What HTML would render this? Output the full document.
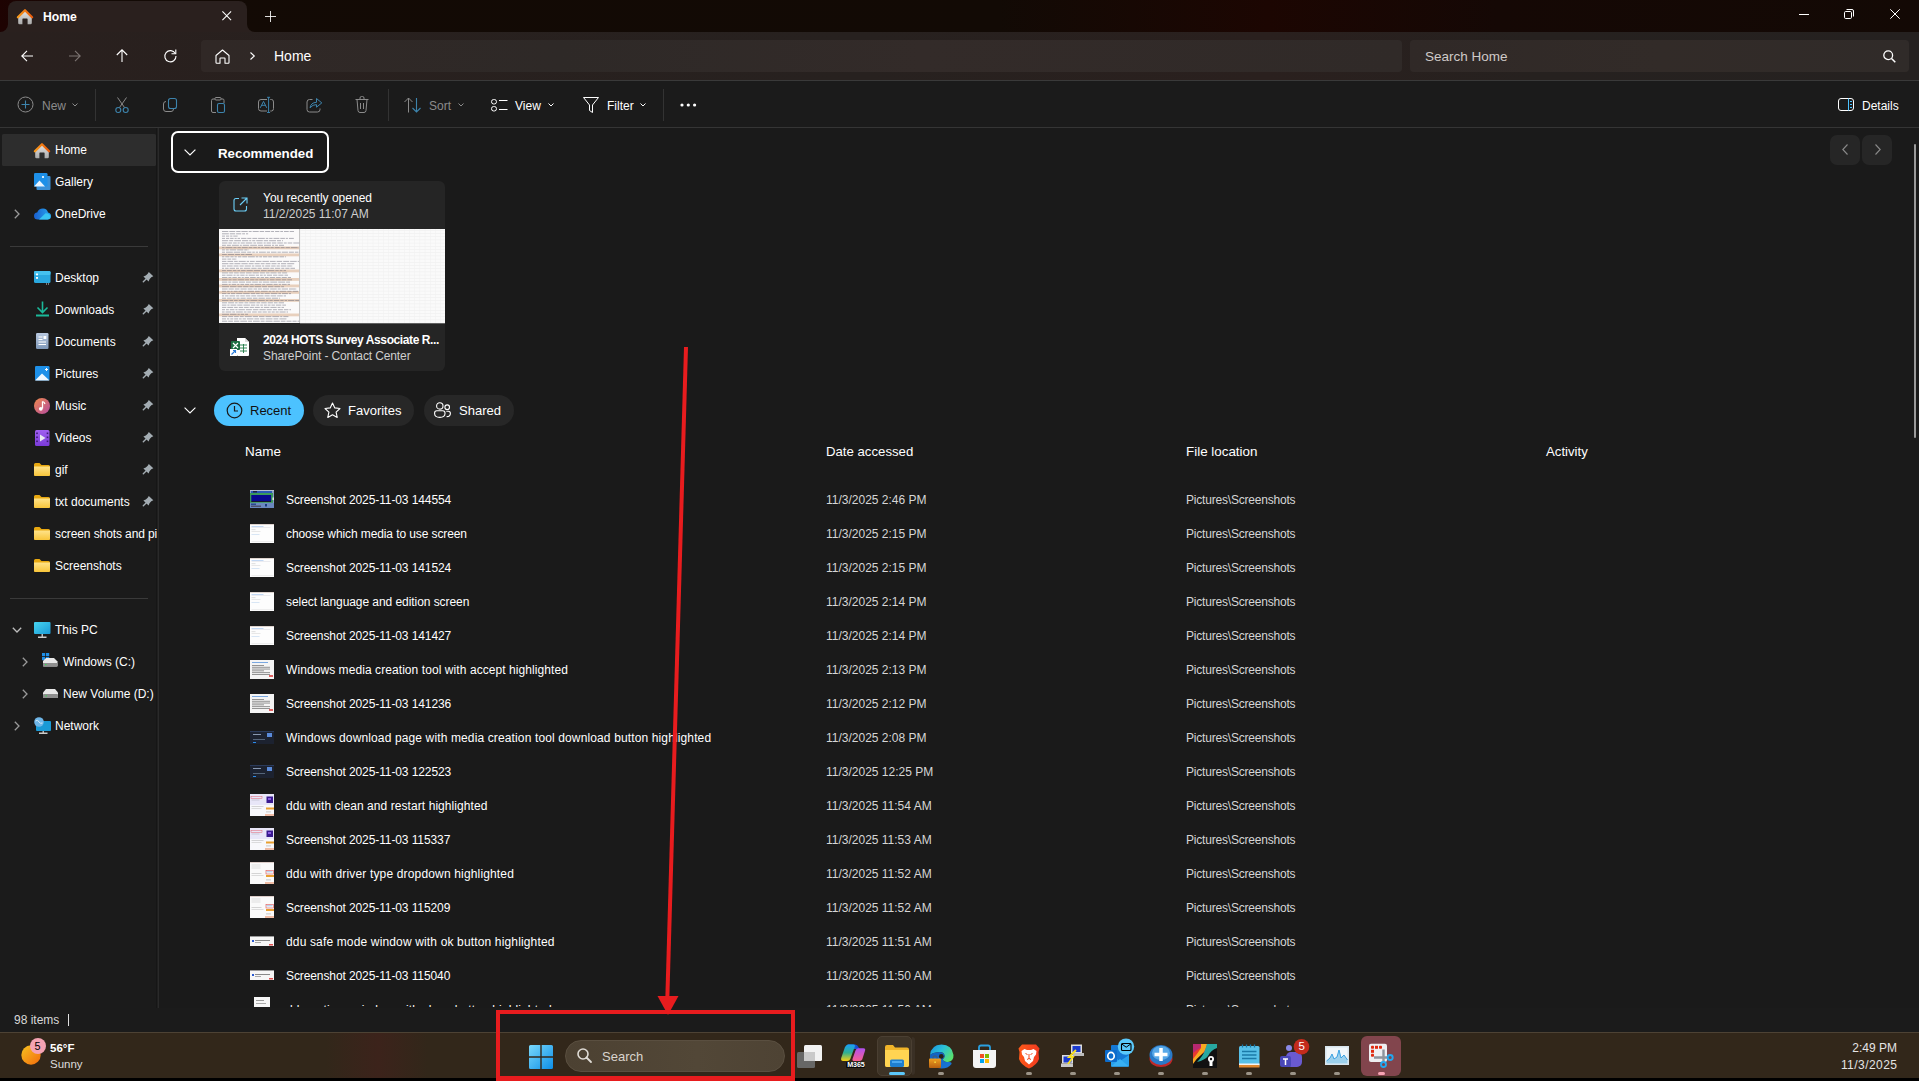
<!DOCTYPE html>
<html><head><meta charset="utf-8"><style>
*{margin:0;padding:0;box-sizing:border-box}
html,body{width:1919px;height:1081px;overflow:hidden;background:#1b1b1b;font-family:"Liberation Sans",sans-serif;color:#fff;font-size:12px}
.a{position:absolute}
.t{position:absolute;white-space:nowrap;line-height:1}
svg{position:absolute;overflow:visible}
</style></head><body>
<div class="a" style="left:0px;top:0px;width:1919px;height:32px;background:linear-gradient(90deg,#1e0302 0%,#130a05 5%,#120a05 52%,#1c0602 66%,#150805 78%,#130905 100%);"></div>
<div class="a" style="left:0px;top:32px;width:1919px;height:48px;background:linear-gradient(90deg,#29201e 0%,#27211f 45%,#2a201e 66%,#26211f 80%,#252120 100%);"></div>
<div class="a" style="left:8px;top:1px;width:239px;height:31px;background:#2a201e;border-radius:8px 8px 0 0"></div>
<div class="a" style="left:0px;top:24px;width:8px;height:8px;background:#2a201e"></div>
<div class="a" style="left:0px;top:23px;width:8px;height:9px;background:#1e0302;border-radius:0 0 8px 0"></div>
<div class="a" style="left:247px;top:24px;width:8px;height:8px;background:#2a201e"></div>
<div class="a" style="left:247px;top:23px;width:8px;height:9px;background:#130a05;border-radius:0 0 0 8px"></div>
<div class="a" style="left:0px;top:80px;width:1919px;height:48px;background:#1b1b1b;border-top:1px solid #3a3a3a;border-bottom:1px solid #353535"></div>
<div class="a" style="left:0px;top:128px;width:158px;height:880px;background:#1b1b1b;"></div>
<div class="a" style="left:156px;top:128px;width:1px;height:880px;background:#161616;"></div>
<div class="a" style="left:157px;top:128px;width:1px;height:880px;background:#1f1f1f;"></div>
<div class="a" style="left:158px;top:128px;width:1px;height:880px;background:#2a2a2a;"></div>
<div class="a" style="left:159px;top:128px;width:1760px;height:880px;background:#1a1a1a;"></div>
<div class="a" style="left:0px;top:1008px;width:1919px;height:24px;background:#1b1b1b;"></div>
<div class="a" style="left:0px;top:1032px;width:1919px;height:46px;background:linear-gradient(90deg,#32271a 0%,#32271a 17%,#3c231b 19.7%,#32271a 22.3%,#32271a 100%);border-top:1px solid #4d4234"></div>
<div class="a" style="left:0px;top:1078px;width:1919px;height:3px;background:#000;"></div>
<svg style="left:17px;top:8px;" width="17" height="17" viewBox="0 0 17 17"><defs><linearGradient id="hg" x1="0" y1="0" x2="0" y2="1"><stop offset="0" stop-color="#e2e2e2"/><stop offset="1" stop-color="#aaaaaa"/></linearGradient><linearGradient id="rf" x1="0" y1="0" x2="1" y2="0"><stop offset="0" stop-color="#f89a1c"/><stop offset="1" stop-color="#e85a0c"/></linearGradient></defs>
<path d="M1.2 8.6 L8 3 L14.8 8.6 V15 Q14.8 16.3 13.5 16.3 H10.6 V11.2 Q10.6 10.6 10 10.6 H6 Q5.4 10.6 5.4 11.2 V16.3 H2.5 Q1.2 16.3 1.2 15 Z" fill="url(#hg)"/>
<path d="M0.9 9.2 L8 2.2 L15.1 9.2" fill="none" stroke="url(#rf)" stroke-width="2.3" stroke-linejoin="round" stroke-linecap="round"/></svg>
<div class="t" style="left:43px;top:10.67px;font-size:12.2px;color:#ffffff;font-weight:bold;">Home</div>
<svg style="left:222px;top:11px;" width="9.5" height="9.5" viewBox="0 0 9.5 9.5"><path d="M0.4 0.4 L9.1 9.1 M9.1 0.4 L0.4 9.1" stroke="#fff" stroke-width="1.05"/></svg>
<svg style="left:265px;top:11px;" width="11" height="11" viewBox="0 0 11 11"><path d="M5.5 0 V11 M0 5.5 H11" stroke="#f4f4f4" stroke-width="0.9"/></svg>
<svg style="left:1799px;top:14px;" width="10" height="1" viewBox="0 0 10 1"><rect x="0" y="0" width="10" height="1" fill="#fff"/></svg>
<svg style="left:1844px;top:9px;" width="10" height="10" viewBox="0 0 10 10"><rect x="0.5" y="2.5" width="7" height="7" rx="1.2" fill="none" stroke="#fff" stroke-width="1"/><path d="M2.5 0.5 H8 Q9.5 0.5 9.5 2 V7.5" fill="none" stroke="#fff" stroke-width="1"/></svg>
<svg style="left:1890px;top:9px;" width="10" height="10" viewBox="0 0 10 10"><path d="M0.3 0.3 L9.7 9.7 M9.7 0.3 L0.3 9.7" stroke="#fff" stroke-width="1"/></svg>
<svg style="left:21px;top:50px;" width="12" height="12" viewBox="0 0 12 12"><path d="M12 6 H1 M6 0.8 L0.8 6 L6 11.2" fill="none" stroke="#fff" stroke-width="1.1"/></svg>
<svg style="left:69px;top:50px;" width="12" height="12" viewBox="0 0 12 12"><path d="M0 6 H11 M6 0.8 L11.2 6 L6 11.2" fill="none" stroke="#7c7472" stroke-width="1.1"/></svg>
<svg style="left:116px;top:49px;" width="12" height="13" viewBox="0 0 12 13"><path d="M6 13 V1 M0.8 6 L6 0.8 L11.2 6" fill="none" stroke="#fff" stroke-width="1.1"/></svg>
<svg style="left:164px;top:49px;" width="13" height="13" viewBox="0 0 13 13"><path d="M11.3 4.5 A5.6 5.6 0 1 0 12 7" fill="none" stroke="#fff" stroke-width="1.1"/><path d="M11.8 0.5 V4.8 H7.5" fill="none" stroke="#fff" stroke-width="1.1"/></svg>
<div class="a" style="left:201px;top:40px;width:1201px;height:32px;background:linear-gradient(90deg,#302826 0%,#2e2927 30%,#332b29 60%,#302a28 100%);border-radius:4px"></div>
<svg style="left:215px;top:49px;" width="15" height="15" viewBox="0 0 15 15"><path d="M1 6.5 L7.5 1 L14 6.5 V13.5 Q14 14.2 13.3 14.2 H10 V9.5 Q10 9 9.5 9 H5.5 Q5 9 5 9.5 V14.2 H1.7 Q1 14.2 1 13.5 Z" fill="none" stroke="#fff" stroke-width="1.1" stroke-linejoin="round"/></svg>
<svg style="left:250px;top:52px;" width="5" height="8" viewBox="0 0 5 8"><path d="M0.5 0.5 L4.3 4 L0.5 7.5" fill="none" stroke="#fff" stroke-width="1.1"/></svg>
<div class="t" style="left:274px;top:49.15px;font-size:14px;color:#ffffff;font-weight:normal;">Home</div>
<div class="a" style="left:1410px;top:40px;width:499px;height:32px;background:linear-gradient(90deg,#302927 0%,#322b28 50%,#302b29 100%);border-radius:4px"></div>
<div class="t" style="left:1425px;top:49.57px;font-size:13.5px;color:#cfcac8;font-weight:normal;">Search Home</div>
<svg style="left:1883px;top:50px;" width="13" height="13" viewBox="0 0 13 13"><circle cx="5.2" cy="5.2" r="4.4" fill="none" stroke="#fff" stroke-width="1.3"/><path d="M8.5 8.5 L12.3 12.3" stroke="#fff" stroke-width="1.5"/></svg>
<svg style="left:17px;top:96px;" width="17" height="17" viewBox="0 0 17 17"><circle cx="8.5" cy="8.5" r="7.5" fill="none" stroke="#8b8b8b" stroke-width="1"/><path d="M8.5 4.5 V12.5 M4.5 8.5 H12.5" stroke="#3d84ad" stroke-width="1.1"/></svg>
<div class="t" style="left:42px;top:99.84px;font-size:12px;color:#8b8b8b;font-weight:normal;">New</div>
<svg style="left:72px;top:103px;" width="6" height="4" viewBox="0 0 6 4"><path d="M0.5 0.5 L3 3 L5.5 0.5" fill="none" stroke="#8b8b8b" stroke-width="1"/></svg>
<div class="a" style="left:95px;top:89px;width:1px;height:32px;background:#333;"></div>
<svg style="left:115px;top:97px;" width="14" height="16" viewBox="0 0 14 16"><path d="M2.5 0.5 L9.5 10.5 M11.5 0.5 L4.5 10.5" stroke="#8b8b8b" stroke-width="1"/><circle cx="3.3" cy="13" r="2.5" fill="none" stroke="#3d84ad" stroke-width="1.1"/><circle cx="10.7" cy="13" r="2.5" fill="none" stroke="#3d84ad" stroke-width="1.1"/></svg>
<svg style="left:163px;top:98px;" width="14" height="14" viewBox="0 0 14 14"><path d="M3 3.5 Q0.5 3.5 0.5 6 V11 Q0.5 13.5 3 13.5 H8 Q10.5 13.5 10.5 11" fill="none" stroke="#8b8b8b" stroke-width="1"/><rect x="5.5" y="0.5" width="8" height="10" rx="2" fill="none" stroke="#3d84ad" stroke-width="1.1"/></svg>
<svg style="left:211px;top:97px;" width="14" height="16" viewBox="0 0 14 16"><path d="M4 2 H2 Q0.5 2 0.5 3.5 V14 Q0.5 15.5 2 15.5 H5 M10 2 H12 Q13 2 13 3.5 V6" fill="none" stroke="#8b8b8b" stroke-width="1"/><rect x="4" y="0.5" width="6" height="2.5" rx="1" fill="none" stroke="#8b8b8b" stroke-width="1"/><rect x="6.5" y="6.5" width="7" height="9" rx="1.5" fill="none" stroke="#3d84ad" stroke-width="1.1"/></svg>
<svg style="left:258px;top:96px;" width="17" height="18" viewBox="0 0 17 18"><path d="M9 3.5 H3 Q0.5 3.5 0.5 6 V12.5 Q0.5 15 3 15 H9 M12.3 3.5 H13.5 Q15.5 3.5 15.5 6 V12.5 Q15.5 15 13.5 15 H12.3" fill="none" stroke="#8b8b8b" stroke-width="1"/><path d="M10.6 1.3 V16.5 M9.1 1.3 H12.1 M9.1 16.5 H12.1" stroke="#3d84ad" stroke-width="1"/><path d="M2.3 11.8 L5.5 5.4 L8.7 11.8 M3.6 9.3 H7.4" fill="none" stroke="#3d84ad" stroke-width="1"/></svg>
<svg style="left:306px;top:97px;" width="17" height="16" viewBox="0 0 17 16"><path d="M6.5 2.5 H3.5 Q1 2.5 1 5 V12.5 Q1 15 3.5 15 H11.5 Q14 15 14 12.5 V11.5" fill="none" stroke="#8b8b8b" stroke-width="1"/><path d="M4 10.8 Q4.8 5.6 10.5 5.3 V1.5 L15.8 5.9 L10.5 10.2 V7.6 Q6.8 7.4 4 10.8 Z" fill="none" stroke="#3d84ad" stroke-width="1" stroke-linejoin="round"/></svg>
<svg style="left:355px;top:96px;" width="14" height="17" viewBox="0 0 14 17"><path d="M0.5 3.5 H13.5 M5 3.5 V2 Q5 0.5 6.5 0.5 H7.5 Q9 0.5 9 2 V3.5 M2 3.5 L3 14.5 Q3.2 16.5 5 16.5 H9 Q10.8 16.5 11 14.5 L12 3.5 M5.5 7 V13 M8.5 7 V13" fill="none" stroke="#8b8b8b" stroke-width="1"/></svg>
<div class="a" style="left:388px;top:89px;width:1px;height:32px;background:#333;"></div>
<svg style="left:404px;top:97px;" width="17" height="16" viewBox="0 0 17 16"><path d="M4.5 15.5 V1 M0.5 5 L4.5 1 L8.5 5" fill="none" stroke="#8b8b8b" stroke-width="1"/><path d="M12.5 1 V15 M8.5 11 L12.5 15 L16.5 11" fill="none" stroke="#3d84ad" stroke-width="1.1"/></svg>
<div class="t" style="left:429px;top:99.84px;font-size:12px;color:#8b8b8b;font-weight:normal;">Sort</div>
<svg style="left:458px;top:103px;" width="6" height="4" viewBox="0 0 6 4"><path d="M0.5 0.5 L3 3 L5.5 0.5" fill="none" stroke="#8b8b8b" stroke-width="1"/></svg>
<svg style="left:491px;top:99px;" width="17" height="13" viewBox="0 0 17 13"><rect x="0.5" y="0.5" width="5" height="4.5" rx="2.2" fill="none" stroke="#fff" stroke-width="1"/><rect x="0.5" y="7.5" width="5" height="4.5" rx="2.2" fill="none" stroke="#fff" stroke-width="1"/><path d="M8 1.5 H16.5 M8 10.5 H16.5" stroke="#fff" stroke-width="1"/></svg>
<div class="t" style="left:515px;top:99.84px;font-size:12px;color:#fff;font-weight:normal;">View</div>
<svg style="left:548px;top:103px;" width="6" height="4" viewBox="0 0 6 4"><path d="M0.5 0.5 L3 3 L5.5 0.5" fill="none" stroke="#fff" stroke-width="1"/></svg>
<svg style="left:583px;top:97px;" width="16" height="16" viewBox="0 0 16 16"><path d="M0.5 0.5 H15.5 L9.5 8 V15.5 L6.5 13.5 V8 Z" fill="none" stroke="#fff" stroke-width="1" stroke-linejoin="round"/></svg>
<div class="t" style="left:607px;top:99.84px;font-size:12px;color:#fff;font-weight:normal;">Filter</div>
<svg style="left:640px;top:103px;" width="6" height="4" viewBox="0 0 6 4"><path d="M0.5 0.5 L3 3 L5.5 0.5" fill="none" stroke="#fff" stroke-width="1"/></svg>
<div class="a" style="left:663px;top:89px;width:1px;height:32px;background:#333;"></div>
<svg style="left:680px;top:103px;" width="17" height="4" viewBox="0 0 17 4"><circle cx="2" cy="2" r="1.6" fill="#fff"/><circle cx="8.3" cy="2" r="1.6" fill="#fff"/><circle cx="14.6" cy="2" r="1.6" fill="#fff"/></svg>
<svg style="left:1838px;top:98px;" width="16" height="13" viewBox="0 0 16 13"><rect x="0.5" y="0.5" width="15" height="12" rx="2.5" fill="none" stroke="#fff" stroke-width="1"/><path d="M10.5 0.5 V12.5" stroke="#4cc2ff" stroke-width="1"/><path d="M12 3.5 H14 M12 6.5 H14 M12 9.5 H14" stroke="#4cc2ff" stroke-width="1"/></svg>
<div class="t" style="left:1862px;top:99.84px;font-size:12px;color:#fff;font-weight:normal;">Details</div>
<div class="a" style="left:2px;top:134px;width:154px;height:32px;background:#2d2d2d;border-radius:1.5px"></div>
<svg style="left:34px;top:142px;" width="17" height="17" viewBox="0 0 17 17"><defs><linearGradient id="hg2" x1="0" y1="0" x2="0" y2="1"><stop offset="0" stop-color="#e2e2e2"/><stop offset="1" stop-color="#aaaaaa"/></linearGradient><linearGradient id="rf2" x1="0" y1="0" x2="1" y2="0"><stop offset="0" stop-color="#f89a1c"/><stop offset="1" stop-color="#e85a0c"/></linearGradient></defs>
<path d="M1.2 8.6 L8 3 L14.8 8.6 V15 Q14.8 16.3 13.5 16.3 H10.6 V11.2 Q10.6 10.6 10 10.6 H6 Q5.4 10.6 5.4 11.2 V16.3 H2.5 Q1.2 16.3 1.2 15 Z" fill="url(#hg2)"/>
<path d="M0.9 9.2 L8 2.2 L15.1 9.2" fill="none" stroke="url(#rf2)" stroke-width="2.3" stroke-linejoin="round" stroke-linecap="round"/></svg>
<div class="t" style="left:55px;top:143.84px;font-size:12px;color:#ffffff;font-weight:normal;">Home</div>
<svg style="left:34px;top:173px;" width="17" height="17" viewBox="0 0 17 17"><rect x="2.5" y="3" width="14" height="14" rx="1" fill="#3a8fd6"/><rect x="0" y="0" width="13.5" height="13.5" rx="1.2" fill="#1e90e8"/><path d="M0 13.5 L5.5 7.5 L11 13.5 Z" fill="#e8f4ff"/><circle cx="9" cy="4" r="1.1" fill="#fff"/></svg>
<div class="t" style="left:55px;top:175.84px;font-size:12px;color:#ffffff;font-weight:normal;">Gallery</div>
<svg style="left:14px;top:209px;" width="6" height="10" viewBox="0 0 6 10"><path d="M0.8 0.8 L5 5 L0.8 9.2" fill="none" stroke="#9a9a9a" stroke-width="1.3"/></svg>
<svg style="left:34px;top:208px;" width="17" height="12" viewBox="0 0 17 12"><defs><linearGradient id="od" x1="0" y1="0" x2="1" y2="0"><stop offset="0" stop-color="#1a5fd0"/><stop offset="1" stop-color="#28a8f0"/></linearGradient></defs><path d="M4 11.5 Q0 11.5 0 8 Q0 5 3.2 4.6 Q4.6 0.5 9 0.5 Q13 0.5 14 4.5 Q17 5 17 8.2 Q17 11.5 13.5 11.5 Z" fill="url(#od)"/><path d="M5 11.5 L11.5 5.2 Q14.5 5 16 7.5 Q17.2 10.8 13.5 11.5 Z" fill="#38c4f4"/></svg>
<div class="t" style="left:55px;top:207.84px;font-size:12px;color:#ffffff;font-weight:normal;">OneDrive</div>
<div class="a" style="left:10px;top:246px;width:138px;height:1px;background:#3a3a3a;"></div>
<svg style="left:34px;top:271px;" width="17" height="14" viewBox="0 0 17 14"><rect x="0" y="0" width="16.5" height="12" rx="1.5" fill="#2aa9e0"/><rect x="0" y="0" width="16.5" height="4" rx="1.2" fill="#45c2ef"/><rect x="2" y="2.5" width="2" height="1.8" fill="#fff"/><rect x="2" y="6" width="2" height="1.8" fill="#fff"/><rect x="12" y="12.5" width="1" height="1" fill="#ddd"/><rect x="14" y="12.5" width="1" height="1" fill="#ddd"/></svg>
<div class="t" style="left:55px;top:271.84px;font-size:12px;color:#ffffff;font-weight:normal;">Desktop</div>
<svg style="left:142px;top:271px;" width="12" height="12" viewBox="0 0 12 12"><path d="M6.8 0.9 L11.3 5.3 L9.3 6.3 L7.5 8.2 L6.6 10.6 L1.4 5.4 L3.8 4.5 L5.7 2.7 Z" fill="#a3acb2"/><path d="M4.6 7.4 L1.3 10.7" stroke="#a3acb2" stroke-width="1.4" stroke-linecap="round"/></svg>
<svg style="left:36px;top:301px;" width="13" height="16" viewBox="0 0 13 16"><path d="M6.5 0.5 V11 M1.5 6.5 L6.5 11.5 L11.5 6.5" fill="none" stroke="#1bb99a" stroke-width="1.6"/><rect x="0" y="13.5" width="13" height="2" fill="#1bb99a"/></svg>
<div class="t" style="left:55px;top:303.84px;font-size:12px;color:#ffffff;font-weight:normal;">Downloads</div>
<svg style="left:142px;top:303px;" width="12" height="12" viewBox="0 0 12 12"><path d="M6.8 0.9 L11.3 5.3 L9.3 6.3 L7.5 8.2 L6.6 10.6 L1.4 5.4 L3.8 4.5 L5.7 2.7 Z" fill="#a3acb2"/><path d="M4.6 7.4 L1.3 10.7" stroke="#a3acb2" stroke-width="1.4" stroke-linecap="round"/></svg>
<svg style="left:36px;top:333px;" width="13" height="16" viewBox="0 0 13 16"><defs><linearGradient id="dg" x1="0" y1="0" x2="0" y2="1"><stop offset="0" stop-color="#b9c9e0"/><stop offset="1" stop-color="#7f98b8"/></linearGradient></defs><rect x="0" y="0" width="12.5" height="16" rx="1.2" fill="url(#dg)"/><path d="M2.5 4 H6.5 M2.5 6.5 H6.5 M2.5 9 H10 M2.5 11.5 H10" stroke="#fff" stroke-width="1"/><rect x="7.5" y="3" width="2.8" height="3" fill="#fff"/></svg>
<div class="t" style="left:55px;top:335.84px;font-size:12px;color:#ffffff;font-weight:normal;">Documents</div>
<svg style="left:142px;top:335px;" width="12" height="12" viewBox="0 0 12 12"><path d="M6.8 0.9 L11.3 5.3 L9.3 6.3 L7.5 8.2 L6.6 10.6 L1.4 5.4 L3.8 4.5 L5.7 2.7 Z" fill="#a3acb2"/><path d="M4.6 7.4 L1.3 10.7" stroke="#a3acb2" stroke-width="1.4" stroke-linecap="round"/></svg>
<svg style="left:35px;top:366px;" width="15" height="15" viewBox="0 0 15 15"><rect x="0" y="0" width="14.5" height="14.5" rx="1.2" fill="#1e90e8"/><path d="M0 14.5 L7 7.5 L14.5 14.5 Z" fill="#f0f8ff"/><path d="M11.5 2 V5 M10 3.5 H13" stroke="#fff" stroke-width="1"/></svg>
<div class="t" style="left:55px;top:367.84px;font-size:12px;color:#ffffff;font-weight:normal;">Pictures</div>
<svg style="left:142px;top:367px;" width="12" height="12" viewBox="0 0 12 12"><path d="M6.8 0.9 L11.3 5.3 L9.3 6.3 L7.5 8.2 L6.6 10.6 L1.4 5.4 L3.8 4.5 L5.7 2.7 Z" fill="#a3acb2"/><path d="M4.6 7.4 L1.3 10.7" stroke="#a3acb2" stroke-width="1.4" stroke-linecap="round"/></svg>
<svg style="left:34px;top:398px;" width="16" height="16" viewBox="0 0 16 16"><defs><linearGradient id="mg" x1="0" y1="0" x2="1" y2="1"><stop offset="0" stop-color="#f08a4b"/><stop offset="1" stop-color="#b44aa0"/></linearGradient></defs><circle cx="8" cy="8" r="8" fill="url(#mg)"/><path d="M8.5 3.5 V10.5" stroke="#fff" stroke-width="1.3"/><circle cx="6.8" cy="10.8" r="1.9" fill="#fff"/><path d="M8.5 3.5 Q10.5 4 11 6" fill="none" stroke="#fff" stroke-width="1.2"/></svg>
<div class="t" style="left:55px;top:399.84px;font-size:12px;color:#ffffff;font-weight:normal;">Music</div>
<svg style="left:142px;top:399px;" width="12" height="12" viewBox="0 0 12 12"><path d="M6.8 0.9 L11.3 5.3 L9.3 6.3 L7.5 8.2 L6.6 10.6 L1.4 5.4 L3.8 4.5 L5.7 2.7 Z" fill="#a3acb2"/><path d="M4.6 7.4 L1.3 10.7" stroke="#a3acb2" stroke-width="1.4" stroke-linecap="round"/></svg>
<svg style="left:35px;top:430px;" width="15" height="16" viewBox="0 0 15 16"><defs><linearGradient id="vg" x1="0" y1="0" x2="0" y2="1"><stop offset="0" stop-color="#a060f0"/><stop offset="1" stop-color="#7a3ad8"/></linearGradient></defs><rect x="0" y="0" width="14.5" height="16" rx="1.5" fill="url(#vg)"/><rect x="1.2" y="2.5" width="1.6" height="1.6" fill="#3a1a70"/><rect x="11.7" y="2.5" width="1.6" height="1.6" fill="#3a1a70"/><rect x="1.2" y="6.5" width="1.6" height="1.6" fill="#3a1a70"/><rect x="11.7" y="6.5" width="1.6" height="1.6" fill="#3a1a70"/><rect x="1.2" y="10.5" width="1.6" height="1.6" fill="#3a1a70"/><rect x="11.7" y="10.5" width="1.6" height="1.6" fill="#3a1a70"/><path d="M5 4.5 L10.5 8 L5 11.5 Z" fill="#e8e8f0"/></svg>
<div class="t" style="left:55px;top:431.84px;font-size:12px;color:#ffffff;font-weight:normal;">Videos</div>
<svg style="left:142px;top:431px;" width="12" height="12" viewBox="0 0 12 12"><path d="M6.8 0.9 L11.3 5.3 L9.3 6.3 L7.5 8.2 L6.6 10.6 L1.4 5.4 L3.8 4.5 L5.7 2.7 Z" fill="#a3acb2"/><path d="M4.6 7.4 L1.3 10.7" stroke="#a3acb2" stroke-width="1.4" stroke-linecap="round"/></svg>
<svg style="left:34px;top:463px;" width="16" height="13" viewBox="0 0 16 13"><defs><linearGradient id="fg" x1="0" y1="0" x2="0" y2="1"><stop offset="0" stop-color="#ffe38a"/><stop offset="1" stop-color="#f8c53a"/></linearGradient></defs><path d="M0 1.5 Q0 0 1.5 0 H5.5 L7.5 2 H14.5 Q16 2 16 3.5 V11.5 Q16 13 14.5 13 H1.5 Q0 13 0 11.5 Z" fill="#e8a810"/><path d="M0 3.5 H16 V11.5 Q16 13 14.5 13 H1.5 Q0 13 0 11.5 Z" fill="url(#fg)"/></svg>
<div class="t" style="left:55px;top:463.84px;font-size:12px;color:#ffffff;font-weight:normal;">gif</div>
<svg style="left:142px;top:463px;" width="12" height="12" viewBox="0 0 12 12"><path d="M6.8 0.9 L11.3 5.3 L9.3 6.3 L7.5 8.2 L6.6 10.6 L1.4 5.4 L3.8 4.5 L5.7 2.7 Z" fill="#a3acb2"/><path d="M4.6 7.4 L1.3 10.7" stroke="#a3acb2" stroke-width="1.4" stroke-linecap="round"/></svg>
<svg style="left:34px;top:495px;" width="16" height="13" viewBox="0 0 16 13"><defs><linearGradient id="fg" x1="0" y1="0" x2="0" y2="1"><stop offset="0" stop-color="#ffe38a"/><stop offset="1" stop-color="#f8c53a"/></linearGradient></defs><path d="M0 1.5 Q0 0 1.5 0 H5.5 L7.5 2 H14.5 Q16 2 16 3.5 V11.5 Q16 13 14.5 13 H1.5 Q0 13 0 11.5 Z" fill="#e8a810"/><path d="M0 3.5 H16 V11.5 Q16 13 14.5 13 H1.5 Q0 13 0 11.5 Z" fill="url(#fg)"/></svg>
<div class="t" style="left:55px;top:495.84px;font-size:12px;color:#ffffff;font-weight:normal;">txt documents</div>
<svg style="left:142px;top:495px;" width="12" height="12" viewBox="0 0 12 12"><path d="M6.8 0.9 L11.3 5.3 L9.3 6.3 L7.5 8.2 L6.6 10.6 L1.4 5.4 L3.8 4.5 L5.7 2.7 Z" fill="#a3acb2"/><path d="M4.6 7.4 L1.3 10.7" stroke="#a3acb2" stroke-width="1.4" stroke-linecap="round"/></svg>
<svg style="left:34px;top:527px;" width="16" height="13" viewBox="0 0 16 13"><defs><linearGradient id="fg" x1="0" y1="0" x2="0" y2="1"><stop offset="0" stop-color="#ffe38a"/><stop offset="1" stop-color="#f8c53a"/></linearGradient></defs><path d="M0 1.5 Q0 0 1.5 0 H5.5 L7.5 2 H14.5 Q16 2 16 3.5 V11.5 Q16 13 14.5 13 H1.5 Q0 13 0 11.5 Z" fill="#e8a810"/><path d="M0 3.5 H16 V11.5 Q16 13 14.5 13 H1.5 Q0 13 0 11.5 Z" fill="url(#fg)"/></svg>
<div class="a" style="left:0;top:521px;width:157px;height:24px;overflow:hidden">
<div class="t" style="left:55px;top:6.84px;font-size:12px;color:#ffffff;font-weight:normal;letter-spacing:-0.1px">screen shots and pi</div>
</div>
<svg style="left:34px;top:559px;" width="16" height="13" viewBox="0 0 16 13"><defs><linearGradient id="fg" x1="0" y1="0" x2="0" y2="1"><stop offset="0" stop-color="#ffe38a"/><stop offset="1" stop-color="#f8c53a"/></linearGradient></defs><path d="M0 1.5 Q0 0 1.5 0 H5.5 L7.5 2 H14.5 Q16 2 16 3.5 V11.5 Q16 13 14.5 13 H1.5 Q0 13 0 11.5 Z" fill="#e8a810"/><path d="M0 3.5 H16 V11.5 Q16 13 14.5 13 H1.5 Q0 13 0 11.5 Z" fill="url(#fg)"/></svg>
<div class="t" style="left:55px;top:559.84px;font-size:12px;color:#ffffff;font-weight:normal;">Screenshots</div>
<div class="a" style="left:10px;top:598px;width:138px;height:1px;background:#3a3a3a;"></div>
<svg style="left:12px;top:627px;" width="10" height="6" viewBox="0 0 10 6"><path d="M0.8 0.8 L5 5 L9.2 0.8" fill="none" stroke="#bdbdbd" stroke-width="1.3"/></svg>
<svg style="left:34px;top:622px;" width="17" height="17" viewBox="0 0 17 17"><defs><linearGradient id="pc" x1="0" y1="0" x2="1" y2="1"><stop offset="0" stop-color="#47d4f0"/><stop offset="1" stop-color="#1a9ad6"/></linearGradient></defs><rect x="0" y="0" width="16.5" height="12" rx="1" fill="url(#pc)"/><rect x="7.5" y="12" width="1.5" height="3" fill="#bbb"/><rect x="4" y="14.5" width="8.5" height="1.5" fill="#ccc"/></svg>
<div class="t" style="left:55px;top:623.84px;font-size:12px;color:#ffffff;font-weight:normal;">This PC</div>
<svg style="left:22px;top:657px;" width="6" height="10" viewBox="0 0 6 10"><path d="M0.8 0.8 L5 5 L0.8 9.2" fill="none" stroke="#9a9a9a" stroke-width="1.3"/></svg>
<svg style="left:42px;top:653px;" width="16" height="14" viewBox="0 0 16 14"><rect x="0" y="0" width="3.2" height="3.2" fill="#1e8fe8"/><rect x="4" y="0" width="3.2" height="3.2" fill="#1e8fe8"/><rect x="0" y="4" width="3.2" height="3.2" fill="#1e8fe8"/><rect x="4" y="4" width="3.2" height="3.2" fill="#1e8fe8"/><path d="M1 8 L4 5 H12 L15.5 8.5 V12.5 Q15.5 13.5 14.5 13.5 H2 Q1 13.5 1 12.5 Z" fill="#e8e8e8"/><rect x="1" y="10" width="14.5" height="3.5" fill="#8f8f8f"/><rect x="3" y="11" width="1.5" height="1.2" fill="#3cd35a"/></svg>
<div class="t" style="left:63px;top:655.84px;font-size:12px;color:#ffffff;font-weight:normal;">Windows (C:)</div>
<svg style="left:22px;top:689px;" width="6" height="10" viewBox="0 0 6 10"><path d="M0.8 0.8 L5 5 L0.8 9.2" fill="none" stroke="#9a9a9a" stroke-width="1.3"/></svg>
<svg style="left:43px;top:689px;" width="15" height="9" viewBox="0 0 15 9"><path d="M0 3.5 L3 0 H12 L15 3.5 V8 Q15 9 14 9 H1 Q0 9 0 8 Z" fill="#e8e8e8"/><rect x="0" y="5" width="15" height="4" rx="0.8" fill="#8f8f8f"/><rect x="2.5" y="6.3" width="1.5" height="1.2" fill="#3cd35a"/></svg>
<div class="t" style="left:63px;top:687.84px;font-size:12px;color:#ffffff;font-weight:normal;">New Volume (D:)</div>
<svg style="left:14px;top:721px;" width="6" height="10" viewBox="0 0 6 10"><path d="M0.8 0.8 L5 5 L0.8 9.2" fill="none" stroke="#9a9a9a" stroke-width="1.3"/></svg>
<svg style="left:34px;top:717px;" width="17" height="17" viewBox="0 0 17 17"><rect x="2" y="4" width="15" height="10" rx="1" fill="#1a9ad6"/><rect x="8.5" y="14" width="1.5" height="2" fill="#bbb"/><rect x="5" y="15.5" width="8.5" height="1.5" fill="#ccc"/><circle cx="5" cy="5" r="4.8" fill="#6fb6e8"/><path d="M1.5 4 Q4 2 5 5 Q6.5 7 8.5 6" fill="none" stroke="#d8eefc" stroke-width="1"/></svg>
<div class="t" style="left:55px;top:719.84px;font-size:12px;color:#ffffff;font-weight:normal;">Network</div>
<div class="a" style="left:171px;top:131px;width:158px;height:42px;border:2px solid #fff;border-radius:7px"></div>
<svg style="left:184px;top:149px;" width="12" height="7" viewBox="0 0 12 7"><path d="M0.6 0.6 L6 6 L11.4 0.6" fill="none" stroke="#fff" stroke-width="1.2"/></svg>
<div class="t" style="left:218px;top:146.74px;font-size:13.3px;color:#fff;font-weight:bold;">Recommended</div>
<div class="a" style="left:1830px;top:135px;width:30px;height:30px;background:#262626;border-radius:7px"></div>
<div class="a" style="left:1862px;top:135px;width:30px;height:30px;background:#262626;border-radius:7px"></div>
<svg style="left:1842px;top:144px;" width="6" height="11" viewBox="0 0 6 11"><path d="M5.5 0.5 L0.8 5.5 L5.5 10.5" fill="none" stroke="#8a8a8a" stroke-width="1.1"/></svg>
<svg style="left:1875px;top:144px;" width="6" height="11" viewBox="0 0 6 11"><path d="M0.5 0.5 L5.2 5.5 L0.5 10.5" fill="none" stroke="#8a8a8a" stroke-width="1.1"/></svg>
<div class="a" style="left:1914px;top:144px;width:2px;height:294px;background:#9a9a9a;border-radius:1px"></div>
<div class="a" style="left:219px;top:181px;width:226px;height:190px;background:#252525;border-radius:6px;overflow:hidden"><div class="a" style="left:0;top:48px;width:226px;height:94px;background:#f5f5f5"></div></div>
<svg style="left:219px;top:229px;" width="226" height="94" viewBox="0 0 226 94"><rect x="0" y="0" width="226" height="94" fill="#fafafa"/><rect x="0" y="0" width="80" height="94" fill="#fbfafa"/><rect x="0" y="17.5" width="80" height="2.8" fill="#e6cbb6" opacity="0.9"/><rect x="0" y="24.5" width="80" height="2.8" fill="#e6cbb6" opacity="0.9"/><rect x="0" y="40.5" width="80" height="2.8" fill="#e6cbb6" opacity="0.9"/><rect x="0" y="49" width="80" height="2.8" fill="#e6cbb6" opacity="0.9"/><rect x="0" y="55.5" width="80" height="2.8" fill="#e6cbb6" opacity="0.9"/><rect x="0" y="62" width="80" height="2.8" fill="#e6cbb6" opacity="0.9"/><rect x="0" y="70" width="80" height="2.8" fill="#e6cbb6" opacity="0.9"/><rect x="0" y="84.5" width="80" height="2.8" fill="#e6cbb6" opacity="0.9"/><rect x="3.0" y="2.0" width="6.3" height="1" fill="#6a6a78" opacity="0.5"/><rect x="10.3" y="2.0" width="5.9" height="1" fill="#6a6a78" opacity="0.5"/><rect x="17.2" y="2.0" width="4.3" height="1" fill="#6a6a78" opacity="0.5"/><rect x="22.4" y="2.0" width="6.3" height="1" fill="#6a6a78" opacity="0.5"/><rect x="29.7" y="2.0" width="2.9" height="1" fill="#6a6a78" opacity="0.5"/><rect x="33.7" y="2.0" width="6.0" height="1" fill="#6a6a78" opacity="0.5"/><rect x="40.7" y="2.0" width="4.4" height="1" fill="#6a6a78" opacity="0.5"/><rect x="46.1" y="2.0" width="5.1" height="1" fill="#6a6a78" opacity="0.5"/><rect x="52.1" y="2.0" width="2.9" height="1" fill="#6a6a78" opacity="0.5"/><rect x="56.1" y="2.0" width="4.2" height="1" fill="#6a6a78" opacity="0.5"/><rect x="61.3" y="2.0" width="2.7" height="1" fill="#6a6a78" opacity="0.5"/><rect x="65.0" y="2.0" width="4.7" height="1" fill="#6a6a78" opacity="0.5"/><rect x="70.7" y="2.0" width="4.3" height="1" fill="#6a6a78" opacity="0.5"/><rect x="3.0" y="4.3" width="6.8" height="1" fill="#6a6a78" opacity="0.5"/><rect x="10.8" y="4.3" width="5.3" height="1" fill="#6a6a78" opacity="0.5"/><rect x="17.1" y="4.3" width="5.1" height="1" fill="#6a6a78" opacity="0.5"/><rect x="23.2" y="4.3" width="2.8" height="1" fill="#6a6a78" opacity="0.5"/><rect x="27.0" y="4.3" width="2.1" height="1" fill="#6a6a78" opacity="0.5"/><rect x="3.0" y="6.6" width="3.0" height="1" fill="#6a6a78" opacity="0.5"/><rect x="7.0" y="6.6" width="3.2" height="1" fill="#6a6a78" opacity="0.5"/><rect x="11.2" y="6.6" width="2.2" height="1" fill="#6a6a78" opacity="0.5"/><rect x="14.3" y="6.6" width="4.3" height="1" fill="#6a6a78" opacity="0.5"/><rect x="3.0" y="8.9" width="3.0" height="1" fill="#6a6a78" opacity="0.5"/><rect x="7.0" y="8.9" width="3.2" height="1" fill="#6a6a78" opacity="0.5"/><rect x="11.1" y="8.9" width="3.5" height="1" fill="#6a6a78" opacity="0.5"/><rect x="15.6" y="8.9" width="2.0" height="1" fill="#6a6a78" opacity="0.5"/><rect x="18.6" y="8.9" width="2.4" height="1" fill="#6a6a78" opacity="0.5"/><rect x="22.1" y="8.9" width="5.3" height="1" fill="#6a6a78" opacity="0.5"/><rect x="28.3" y="8.9" width="4.0" height="1" fill="#6a6a78" opacity="0.5"/><rect x="33.4" y="8.9" width="4.8" height="1" fill="#6a6a78" opacity="0.5"/><rect x="39.1" y="8.9" width="6.7" height="1" fill="#6a6a78" opacity="0.5"/><rect x="46.8" y="8.9" width="2.4" height="1" fill="#6a6a78" opacity="0.5"/><rect x="50.2" y="8.9" width="3.3" height="1" fill="#6a6a78" opacity="0.5"/><rect x="54.5" y="8.9" width="5.8" height="1" fill="#6a6a78" opacity="0.5"/><rect x="61.3" y="8.9" width="4.6" height="1" fill="#6a6a78" opacity="0.5"/><rect x="66.8" y="8.9" width="2.1" height="1" fill="#6a6a78" opacity="0.5"/><rect x="70.0" y="8.9" width="4.8" height="1" fill="#6a6a78" opacity="0.5"/><rect x="3.0" y="11.2" width="6.2" height="1" fill="#6a6a78" opacity="0.5"/><rect x="10.2" y="11.2" width="3.9" height="1" fill="#6a6a78" opacity="0.5"/><rect x="15.2" y="11.2" width="6.8" height="1" fill="#6a6a78" opacity="0.5"/><rect x="23.0" y="11.2" width="6.2" height="1" fill="#6a6a78" opacity="0.5"/><rect x="30.2" y="11.2" width="2.0" height="1" fill="#6a6a78" opacity="0.5"/><rect x="33.2" y="11.2" width="3.0" height="1" fill="#6a6a78" opacity="0.5"/><rect x="37.2" y="11.2" width="6.6" height="1" fill="#6a6a78" opacity="0.5"/><rect x="44.8" y="11.2" width="4.3" height="1" fill="#6a6a78" opacity="0.5"/><rect x="50.1" y="11.2" width="6.9" height="1" fill="#6a6a78" opacity="0.5"/><rect x="58.0" y="11.2" width="4.0" height="1" fill="#6a6a78" opacity="0.5"/><rect x="63.0" y="11.2" width="1.0" height="1" fill="#6a6a78" opacity="0.5"/><rect x="3.0" y="13.5" width="5.4" height="1" fill="#6a6a78" opacity="0.5"/><rect x="9.4" y="13.5" width="3.7" height="1" fill="#6a6a78" opacity="0.5"/><rect x="14.1" y="13.5" width="3.6" height="1" fill="#6a6a78" opacity="0.5"/><rect x="18.6" y="13.5" width="2.1" height="1" fill="#6a6a78" opacity="0.5"/><rect x="21.7" y="13.5" width="4.1" height="1" fill="#6a6a78" opacity="0.5"/><rect x="26.7" y="13.5" width="6.6" height="1" fill="#6a6a78" opacity="0.5"/><rect x="34.4" y="13.5" width="2.7" height="1" fill="#6a6a78" opacity="0.5"/><rect x="38.0" y="13.5" width="5.5" height="1" fill="#6a6a78" opacity="0.5"/><rect x="44.6" y="13.5" width="2.1" height="1" fill="#6a6a78" opacity="0.5"/><rect x="47.6" y="13.5" width="4.3" height="1" fill="#6a6a78" opacity="0.5"/><rect x="52.9" y="13.5" width="4.4" height="1" fill="#6a6a78" opacity="0.5"/><rect x="58.4" y="13.5" width="5.4" height="1" fill="#6a6a78" opacity="0.5"/><rect x="64.8" y="13.5" width="2.9" height="1" fill="#6a6a78" opacity="0.5"/><rect x="68.7" y="13.5" width="4.5" height="1" fill="#6a6a78" opacity="0.5"/><rect x="74.3" y="13.5" width="6.7" height="1" fill="#6a6a78" opacity="0.5"/><rect x="3.0" y="15.8" width="3.9" height="1" fill="#6a6a78" opacity="0.5"/><rect x="7.9" y="15.8" width="4.0" height="1" fill="#6a6a78" opacity="0.5"/><rect x="12.9" y="15.8" width="7.0" height="1" fill="#6a6a78" opacity="0.5"/><rect x="20.8" y="15.8" width="2.0" height="1" fill="#6a6a78" opacity="0.5"/><rect x="23.8" y="15.8" width="6.3" height="1" fill="#6a6a78" opacity="0.5"/><rect x="31.2" y="15.8" width="6.9" height="1" fill="#6a6a78" opacity="0.5"/><rect x="39.0" y="15.8" width="5.0" height="1" fill="#6a6a78" opacity="0.5"/><rect x="45.0" y="15.8" width="7.0" height="1" fill="#6a6a78" opacity="0.5"/><rect x="53.0" y="15.8" width="2.1" height="1" fill="#6a6a78" opacity="0.5"/><rect x="56.1" y="15.8" width="2.9" height="1" fill="#6a6a78" opacity="0.5"/><rect x="60.0" y="15.8" width="5.0" height="1" fill="#6a6a78" opacity="0.5"/><rect x="3.0" y="18.1" width="2.5" height="1" fill="#6a6a78" opacity="0.5"/><rect x="6.5" y="18.1" width="6.9" height="1" fill="#6a6a78" opacity="0.5"/><rect x="14.4" y="18.1" width="3.1" height="1" fill="#6a6a78" opacity="0.5"/><rect x="18.5" y="18.1" width="3.3" height="1" fill="#6a6a78" opacity="0.5"/><rect x="22.8" y="18.1" width="5.9" height="1" fill="#6a6a78" opacity="0.5"/><rect x="29.7" y="18.1" width="3.6" height="1" fill="#6a6a78" opacity="0.5"/><rect x="34.3" y="18.1" width="3.5" height="1" fill="#6a6a78" opacity="0.5"/><rect x="38.8" y="18.1" width="2.4" height="1" fill="#6a6a78" opacity="0.5"/><rect x="42.2" y="18.1" width="2.5" height="1" fill="#6a6a78" opacity="0.5"/><rect x="45.6" y="18.1" width="4.9" height="1" fill="#6a6a78" opacity="0.5"/><rect x="51.5" y="18.1" width="3.2" height="1" fill="#6a6a78" opacity="0.5"/><rect x="55.7" y="18.1" width="5.0" height="1" fill="#6a6a78" opacity="0.5"/><rect x="61.7" y="18.1" width="3.9" height="1" fill="#6a6a78" opacity="0.5"/><rect x="66.6" y="18.1" width="4.3" height="1" fill="#6a6a78" opacity="0.5"/><rect x="71.9" y="18.1" width="6.8" height="1" fill="#6a6a78" opacity="0.5"/><rect x="79.7" y="18.1" width="0.3" height="1" fill="#6a6a78" opacity="0.5"/><rect x="3.0" y="20.4" width="2.9" height="1" fill="#6a6a78" opacity="0.5"/><rect x="6.9" y="20.4" width="2.8" height="1" fill="#6a6a78" opacity="0.5"/><rect x="10.7" y="20.4" width="6.5" height="1" fill="#6a6a78" opacity="0.5"/><rect x="18.2" y="20.4" width="6.1" height="1" fill="#6a6a78" opacity="0.5"/><rect x="25.3" y="20.4" width="3.2" height="1" fill="#6a6a78" opacity="0.5"/><rect x="29.6" y="20.4" width="0.4" height="1" fill="#6a6a78" opacity="0.5"/><rect x="3.0" y="22.7" width="3.0" height="1" fill="#6a6a78" opacity="0.5"/><rect x="7.0" y="22.7" width="6.8" height="1" fill="#6a6a78" opacity="0.5"/><rect x="14.7" y="22.7" width="6.4" height="1" fill="#6a6a78" opacity="0.5"/><rect x="22.1" y="22.7" width="5.0" height="1" fill="#6a6a78" opacity="0.5"/><rect x="28.2" y="22.7" width="4.1" height="1" fill="#6a6a78" opacity="0.5"/><rect x="33.3" y="22.7" width="2.5" height="1" fill="#6a6a78" opacity="0.5"/><rect x="36.8" y="22.7" width="2.2" height="1" fill="#6a6a78" opacity="0.5"/><rect x="40.0" y="22.7" width="6.8" height="1" fill="#6a6a78" opacity="0.5"/><rect x="47.8" y="22.7" width="3.2" height="1" fill="#6a6a78" opacity="0.5"/><rect x="52.0" y="22.7" width="5.5" height="1" fill="#6a6a78" opacity="0.5"/><rect x="58.5" y="22.7" width="3.3" height="1" fill="#6a6a78" opacity="0.5"/><rect x="62.8" y="22.7" width="6.1" height="1" fill="#6a6a78" opacity="0.5"/><rect x="69.9" y="22.7" width="5.0" height="1" fill="#6a6a78" opacity="0.5"/><rect x="75.9" y="22.7" width="3.5" height="1" fill="#6a6a78" opacity="0.5"/><rect x="80.4" y="22.7" width="0.6" height="1" fill="#6a6a78" opacity="0.5"/><rect x="3.0" y="25.0" width="4.8" height="1" fill="#6a6a78" opacity="0.5"/><rect x="8.8" y="25.0" width="6.3" height="1" fill="#6a6a78" opacity="0.5"/><rect x="16.1" y="25.0" width="5.1" height="1" fill="#6a6a78" opacity="0.5"/><rect x="22.1" y="25.0" width="3.4" height="1" fill="#6a6a78" opacity="0.5"/><rect x="26.5" y="25.0" width="6.5" height="1" fill="#6a6a78" opacity="0.5"/><rect x="3.0" y="27.3" width="2.3" height="1" fill="#6a6a78" opacity="0.5"/><rect x="6.3" y="27.3" width="4.1" height="1" fill="#6a6a78" opacity="0.5"/><rect x="11.4" y="27.3" width="3.2" height="1" fill="#6a6a78" opacity="0.5"/><rect x="15.6" y="27.3" width="2.2" height="1" fill="#6a6a78" opacity="0.5"/><rect x="18.9" y="27.3" width="3.4" height="1" fill="#6a6a78" opacity="0.5"/><rect x="23.3" y="27.3" width="4.7" height="1" fill="#6a6a78" opacity="0.5"/><rect x="28.9" y="27.3" width="6.9" height="1" fill="#6a6a78" opacity="0.5"/><rect x="36.8" y="27.3" width="2.5" height="1" fill="#6a6a78" opacity="0.5"/><rect x="40.3" y="27.3" width="2.7" height="1" fill="#6a6a78" opacity="0.5"/><rect x="44.0" y="27.3" width="4.3" height="1" fill="#6a6a78" opacity="0.5"/><rect x="49.2" y="27.3" width="3.7" height="1" fill="#6a6a78" opacity="0.5"/><rect x="53.9" y="27.3" width="5.7" height="1" fill="#6a6a78" opacity="0.5"/><rect x="60.5" y="27.3" width="4.6" height="1" fill="#6a6a78" opacity="0.5"/><rect x="66.1" y="27.3" width="0.9" height="1" fill="#6a6a78" opacity="0.5"/><rect x="3.0" y="29.6" width="4.4" height="1" fill="#6a6a78" opacity="0.5"/><rect x="8.4" y="29.6" width="3.8" height="1" fill="#6a6a78" opacity="0.5"/><rect x="13.2" y="29.6" width="3.6" height="1" fill="#6a6a78" opacity="0.5"/><rect x="17.7" y="29.6" width="0.3" height="1" fill="#6a6a78" opacity="0.5"/><rect x="3.0" y="31.9" width="4.4" height="1" fill="#6a6a78" opacity="0.5"/><rect x="8.4" y="31.9" width="5.7" height="1" fill="#6a6a78" opacity="0.5"/><rect x="15.1" y="31.9" width="3.6" height="1" fill="#6a6a78" opacity="0.5"/><rect x="19.7" y="31.9" width="7.0" height="1" fill="#6a6a78" opacity="0.5"/><rect x="27.7" y="31.9" width="2.4" height="1" fill="#6a6a78" opacity="0.5"/><rect x="31.0" y="31.9" width="4.7" height="1" fill="#6a6a78" opacity="0.5"/><rect x="36.8" y="31.9" width="5.7" height="1" fill="#6a6a78" opacity="0.5"/><rect x="43.4" y="31.9" width="6.5" height="1" fill="#6a6a78" opacity="0.5"/><rect x="50.9" y="31.9" width="5.7" height="1" fill="#6a6a78" opacity="0.5"/><rect x="57.6" y="31.9" width="5.5" height="1" fill="#6a6a78" opacity="0.5"/><rect x="64.2" y="31.9" width="6.0" height="1" fill="#6a6a78" opacity="0.5"/><rect x="71.1" y="31.9" width="6.6" height="1" fill="#6a6a78" opacity="0.5"/><rect x="78.7" y="31.9" width="1.3" height="1" fill="#6a6a78" opacity="0.5"/><rect x="3.0" y="34.2" width="6.4" height="1" fill="#6a6a78" opacity="0.5"/><rect x="10.4" y="34.2" width="4.1" height="1" fill="#6a6a78" opacity="0.5"/><rect x="15.4" y="34.2" width="6.0" height="1" fill="#6a6a78" opacity="0.5"/><rect x="22.4" y="34.2" width="6.3" height="1" fill="#6a6a78" opacity="0.5"/><rect x="29.7" y="34.2" width="4.9" height="1" fill="#6a6a78" opacity="0.5"/><rect x="35.6" y="34.2" width="5.1" height="1" fill="#6a6a78" opacity="0.5"/><rect x="41.7" y="34.2" width="3.9" height="1" fill="#6a6a78" opacity="0.5"/><rect x="46.6" y="34.2" width="4.9" height="1" fill="#6a6a78" opacity="0.5"/><rect x="52.5" y="34.2" width="5.0" height="1" fill="#6a6a78" opacity="0.5"/><rect x="58.6" y="34.2" width="2.4" height="1" fill="#6a6a78" opacity="0.5"/><rect x="62.0" y="34.2" width="5.2" height="1" fill="#6a6a78" opacity="0.5"/><rect x="68.2" y="34.2" width="7.0" height="1" fill="#6a6a78" opacity="0.5"/><rect x="3.0" y="36.5" width="3.9" height="1" fill="#6a6a78" opacity="0.5"/><rect x="7.9" y="36.5" width="5.7" height="1" fill="#6a6a78" opacity="0.5"/><rect x="14.6" y="36.5" width="4.9" height="1" fill="#6a6a78" opacity="0.5"/><rect x="20.5" y="36.5" width="4.2" height="1" fill="#6a6a78" opacity="0.5"/><rect x="25.7" y="36.5" width="6.2" height="1" fill="#6a6a78" opacity="0.5"/><rect x="32.9" y="36.5" width="2.4" height="1" fill="#6a6a78" opacity="0.5"/><rect x="36.3" y="36.5" width="5.8" height="1" fill="#6a6a78" opacity="0.5"/><rect x="43.1" y="36.5" width="2.1" height="1" fill="#6a6a78" opacity="0.5"/><rect x="46.2" y="36.5" width="5.0" height="1" fill="#6a6a78" opacity="0.5"/><rect x="52.2" y="36.5" width="4.4" height="1" fill="#6a6a78" opacity="0.5"/><rect x="57.6" y="36.5" width="3.2" height="1" fill="#6a6a78" opacity="0.5"/><rect x="61.8" y="36.5" width="5.5" height="1" fill="#6a6a78" opacity="0.5"/><rect x="68.3" y="36.5" width="4.5" height="1" fill="#6a6a78" opacity="0.5"/><rect x="73.8" y="36.5" width="0.2" height="1" fill="#6a6a78" opacity="0.5"/><rect x="3.0" y="38.8" width="2.1" height="1" fill="#6a6a78" opacity="0.5"/><rect x="6.1" y="38.8" width="3.5" height="1" fill="#6a6a78" opacity="0.5"/><rect x="10.6" y="38.8" width="5.4" height="1" fill="#6a6a78" opacity="0.5"/><rect x="17.0" y="38.8" width="3.0" height="1" fill="#6a6a78" opacity="0.5"/><rect x="21.0" y="38.8" width="2.8" height="1" fill="#6a6a78" opacity="0.5"/><rect x="24.8" y="38.8" width="6.5" height="1" fill="#6a6a78" opacity="0.5"/><rect x="32.3" y="38.8" width="5.3" height="1" fill="#6a6a78" opacity="0.5"/><rect x="38.6" y="38.8" width="4.2" height="1" fill="#6a6a78" opacity="0.5"/><rect x="43.9" y="38.8" width="6.5" height="1" fill="#6a6a78" opacity="0.5"/><rect x="51.3" y="38.8" width="3.6" height="1" fill="#6a6a78" opacity="0.5"/><rect x="55.9" y="38.8" width="5.3" height="1" fill="#6a6a78" opacity="0.5"/><rect x="62.3" y="38.8" width="3.0" height="1" fill="#6a6a78" opacity="0.5"/><rect x="66.3" y="38.8" width="4.2" height="1" fill="#6a6a78" opacity="0.5"/><rect x="71.4" y="38.8" width="4.6" height="1" fill="#6a6a78" opacity="0.5"/><rect x="3.0" y="41.1" width="3.9" height="1" fill="#6a6a78" opacity="0.5"/><rect x="7.9" y="41.1" width="4.9" height="1" fill="#6a6a78" opacity="0.5"/><rect x="13.8" y="41.1" width="3.6" height="1" fill="#6a6a78" opacity="0.5"/><rect x="18.4" y="41.1" width="2.7" height="1" fill="#6a6a78" opacity="0.5"/><rect x="22.1" y="41.1" width="4.5" height="1" fill="#6a6a78" opacity="0.5"/><rect x="27.6" y="41.1" width="6.2" height="1" fill="#6a6a78" opacity="0.5"/><rect x="34.8" y="41.1" width="6.2" height="1" fill="#6a6a78" opacity="0.5"/><rect x="42.0" y="41.1" width="5.6" height="1" fill="#6a6a78" opacity="0.5"/><rect x="48.6" y="41.1" width="6.8" height="1" fill="#6a6a78" opacity="0.5"/><rect x="56.3" y="41.1" width="3.4" height="1" fill="#6a6a78" opacity="0.5"/><rect x="60.7" y="41.1" width="2.8" height="1" fill="#6a6a78" opacity="0.5"/><rect x="64.5" y="41.1" width="2.5" height="1" fill="#6a6a78" opacity="0.5"/><rect x="3.0" y="43.4" width="6.2" height="1" fill="#6a6a78" opacity="0.5"/><rect x="10.2" y="43.4" width="3.9" height="1" fill="#6a6a78" opacity="0.5"/><rect x="15.1" y="43.4" width="4.6" height="1" fill="#6a6a78" opacity="0.5"/><rect x="20.7" y="43.4" width="5.4" height="1" fill="#6a6a78" opacity="0.5"/><rect x="27.0" y="43.4" width="5.6" height="1" fill="#6a6a78" opacity="0.5"/><rect x="33.6" y="43.4" width="6.2" height="1" fill="#6a6a78" opacity="0.5"/><rect x="40.8" y="43.4" width="5.1" height="1" fill="#6a6a78" opacity="0.5"/><rect x="46.9" y="43.4" width="3.6" height="1" fill="#6a6a78" opacity="0.5"/><rect x="51.5" y="43.4" width="6.1" height="1" fill="#6a6a78" opacity="0.5"/><rect x="58.7" y="43.4" width="3.4" height="1" fill="#6a6a78" opacity="0.5"/><rect x="63.1" y="43.4" width="5.0" height="1" fill="#6a6a78" opacity="0.5"/><rect x="3.0" y="45.7" width="3.5" height="1" fill="#6a6a78" opacity="0.5"/><rect x="7.5" y="45.7" width="6.0" height="1" fill="#6a6a78" opacity="0.5"/><rect x="14.5" y="45.7" width="2.1" height="1" fill="#6a6a78" opacity="0.5"/><rect x="17.6" y="45.7" width="2.7" height="1" fill="#6a6a78" opacity="0.5"/><rect x="21.3" y="45.7" width="4.3" height="1" fill="#6a6a78" opacity="0.5"/><rect x="26.6" y="45.7" width="2.1" height="1" fill="#6a6a78" opacity="0.5"/><rect x="29.7" y="45.7" width="6.1" height="1" fill="#6a6a78" opacity="0.5"/><rect x="36.8" y="45.7" width="3.2" height="1" fill="#6a6a78" opacity="0.5"/><rect x="41.0" y="45.7" width="2.7" height="1" fill="#6a6a78" opacity="0.5"/><rect x="44.7" y="45.7" width="2.2" height="1" fill="#6a6a78" opacity="0.5"/><rect x="47.9" y="45.7" width="5.1" height="1" fill="#6a6a78" opacity="0.5"/><rect x="54.1" y="45.7" width="4.2" height="1" fill="#6a6a78" opacity="0.5"/><rect x="59.3" y="45.7" width="5.1" height="1" fill="#6a6a78" opacity="0.5"/><rect x="65.5" y="45.7" width="3.5" height="1" fill="#6a6a78" opacity="0.5"/><rect x="3.0" y="48.0" width="5.4" height="1" fill="#6a6a78" opacity="0.5"/><rect x="9.4" y="48.0" width="3.0" height="1" fill="#6a6a78" opacity="0.5"/><rect x="13.4" y="48.0" width="4.4" height="1" fill="#6a6a78" opacity="0.5"/><rect x="18.8" y="48.0" width="2.9" height="1" fill="#6a6a78" opacity="0.5"/><rect x="22.7" y="48.0" width="2.1" height="1" fill="#6a6a78" opacity="0.5"/><rect x="25.7" y="48.0" width="4.4" height="1" fill="#6a6a78" opacity="0.5"/><rect x="31.1" y="48.0" width="5.6" height="1" fill="#6a6a78" opacity="0.5"/><rect x="37.7" y="48.0" width="2.9" height="1" fill="#6a6a78" opacity="0.5"/><rect x="41.6" y="48.0" width="3.4" height="1" fill="#6a6a78" opacity="0.5"/><rect x="45.9" y="48.0" width="3.7" height="1" fill="#6a6a78" opacity="0.5"/><rect x="50.7" y="48.0" width="5.5" height="1" fill="#6a6a78" opacity="0.5"/><rect x="57.1" y="48.0" width="4.6" height="1" fill="#6a6a78" opacity="0.5"/><rect x="62.7" y="48.0" width="5.1" height="1" fill="#6a6a78" opacity="0.5"/><rect x="68.8" y="48.0" width="3.2" height="1" fill="#6a6a78" opacity="0.5"/><rect x="3.0" y="50.3" width="5.5" height="1" fill="#6a6a78" opacity="0.5"/><rect x="9.5" y="50.3" width="3.1" height="1" fill="#6a6a78" opacity="0.5"/><rect x="13.6" y="50.3" width="4.1" height="1" fill="#6a6a78" opacity="0.5"/><rect x="18.7" y="50.3" width="6.5" height="1" fill="#6a6a78" opacity="0.5"/><rect x="26.1" y="50.3" width="3.9" height="1" fill="#6a6a78" opacity="0.5"/><rect x="31.1" y="50.3" width="4.3" height="1" fill="#6a6a78" opacity="0.5"/><rect x="36.3" y="50.3" width="3.0" height="1" fill="#6a6a78" opacity="0.5"/><rect x="40.3" y="50.3" width="6.4" height="1" fill="#6a6a78" opacity="0.5"/><rect x="47.7" y="50.3" width="2.0" height="1" fill="#6a6a78" opacity="0.5"/><rect x="50.8" y="50.3" width="4.8" height="1" fill="#6a6a78" opacity="0.5"/><rect x="56.5" y="50.3" width="5.3" height="1" fill="#6a6a78" opacity="0.5"/><rect x="62.8" y="50.3" width="4.5" height="1" fill="#6a6a78" opacity="0.5"/><rect x="68.3" y="50.3" width="4.7" height="1" fill="#6a6a78" opacity="0.5"/><rect x="3.0" y="52.6" width="5.3" height="1" fill="#6a6a78" opacity="0.5"/><rect x="9.3" y="52.6" width="3.0" height="1" fill="#6a6a78" opacity="0.5"/><rect x="13.3" y="52.6" width="5.6" height="1" fill="#6a6a78" opacity="0.5"/><rect x="19.9" y="52.6" width="6.1" height="1" fill="#6a6a78" opacity="0.5"/><rect x="27.0" y="52.6" width="5.2" height="1" fill="#6a6a78" opacity="0.5"/><rect x="33.2" y="52.6" width="5.6" height="1" fill="#6a6a78" opacity="0.5"/><rect x="39.8" y="52.6" width="3.1" height="1" fill="#6a6a78" opacity="0.5"/><rect x="43.8" y="52.6" width="6.5" height="1" fill="#6a6a78" opacity="0.5"/><rect x="51.3" y="52.6" width="6.9" height="1" fill="#6a6a78" opacity="0.5"/><rect x="59.2" y="52.6" width="6.9" height="1" fill="#6a6a78" opacity="0.5"/><rect x="67.1" y="52.6" width="3.9" height="1" fill="#6a6a78" opacity="0.5"/><rect x="3.0" y="54.9" width="5.6" height="1" fill="#6a6a78" opacity="0.5"/><rect x="9.6" y="54.9" width="2.1" height="1" fill="#6a6a78" opacity="0.5"/><rect x="12.7" y="54.9" width="4.5" height="1" fill="#6a6a78" opacity="0.5"/><rect x="18.2" y="54.9" width="2.2" height="1" fill="#6a6a78" opacity="0.5"/><rect x="21.4" y="54.9" width="3.7" height="1" fill="#6a6a78" opacity="0.5"/><rect x="26.1" y="54.9" width="4.1" height="1" fill="#6a6a78" opacity="0.5"/><rect x="31.2" y="54.9" width="3.4" height="1" fill="#6a6a78" opacity="0.5"/><rect x="35.6" y="54.9" width="6.6" height="1" fill="#6a6a78" opacity="0.5"/><rect x="43.2" y="54.9" width="3.1" height="1" fill="#6a6a78" opacity="0.5"/><rect x="47.3" y="54.9" width="6.3" height="1" fill="#6a6a78" opacity="0.5"/><rect x="54.6" y="54.9" width="4.1" height="1" fill="#6a6a78" opacity="0.5"/><rect x="59.7" y="54.9" width="2.2" height="1" fill="#6a6a78" opacity="0.5"/><rect x="62.9" y="54.9" width="4.7" height="1" fill="#6a6a78" opacity="0.5"/><rect x="68.6" y="54.9" width="2.4" height="1" fill="#6a6a78" opacity="0.5"/><rect x="3.0" y="57.2" width="7.0" height="1" fill="#6a6a78" opacity="0.5"/><rect x="11.0" y="57.2" width="6.5" height="1" fill="#6a6a78" opacity="0.5"/><rect x="18.5" y="57.2" width="4.6" height="1" fill="#6a6a78" opacity="0.5"/><rect x="24.1" y="57.2" width="5.4" height="1" fill="#6a6a78" opacity="0.5"/><rect x="30.5" y="57.2" width="4.2" height="1" fill="#6a6a78" opacity="0.5"/><rect x="35.7" y="57.2" width="6.4" height="1" fill="#6a6a78" opacity="0.5"/><rect x="43.1" y="57.2" width="4.9" height="1" fill="#6a6a78" opacity="0.5"/><rect x="49.0" y="57.2" width="5.4" height="1" fill="#6a6a78" opacity="0.5"/><rect x="55.4" y="57.2" width="5.8" height="1" fill="#6a6a78" opacity="0.5"/><rect x="62.2" y="57.2" width="2.8" height="1" fill="#6a6a78" opacity="0.5"/><rect x="3.0" y="59.5" width="5.6" height="1" fill="#6a6a78" opacity="0.5"/><rect x="9.6" y="59.5" width="5.2" height="1" fill="#6a6a78" opacity="0.5"/><rect x="15.8" y="59.5" width="4.6" height="1" fill="#6a6a78" opacity="0.5"/><rect x="21.5" y="59.5" width="6.2" height="1" fill="#6a6a78" opacity="0.5"/><rect x="28.7" y="59.5" width="4.8" height="1" fill="#6a6a78" opacity="0.5"/><rect x="34.5" y="59.5" width="3.6" height="1" fill="#6a6a78" opacity="0.5"/><rect x="39.0" y="59.5" width="3.9" height="1" fill="#6a6a78" opacity="0.5"/><rect x="43.9" y="59.5" width="6.2" height="1" fill="#6a6a78" opacity="0.5"/><rect x="51.2" y="59.5" width="6.5" height="1" fill="#6a6a78" opacity="0.5"/><rect x="58.7" y="59.5" width="3.0" height="1" fill="#6a6a78" opacity="0.5"/><rect x="62.7" y="59.5" width="6.3" height="1" fill="#6a6a78" opacity="0.5"/><rect x="70.0" y="59.5" width="6.8" height="1" fill="#6a6a78" opacity="0.5"/><rect x="77.8" y="59.5" width="0.2" height="1" fill="#6a6a78" opacity="0.5"/><rect x="3.0" y="61.8" width="4.1" height="1" fill="#6a6a78" opacity="0.5"/><rect x="8.1" y="61.8" width="2.6" height="1" fill="#6a6a78" opacity="0.5"/><rect x="11.6" y="61.8" width="2.0" height="1" fill="#6a6a78" opacity="0.5"/><rect x="14.7" y="61.8" width="3.9" height="1" fill="#6a6a78" opacity="0.5"/><rect x="19.5" y="61.8" width="4.7" height="1" fill="#6a6a78" opacity="0.5"/><rect x="25.2" y="61.8" width="2.2" height="1" fill="#6a6a78" opacity="0.5"/><rect x="28.4" y="61.8" width="6.6" height="1" fill="#6a6a78" opacity="0.5"/><rect x="36.0" y="61.8" width="4.7" height="1" fill="#6a6a78" opacity="0.5"/><rect x="41.8" y="61.8" width="6.9" height="1" fill="#6a6a78" opacity="0.5"/><rect x="49.7" y="61.8" width="2.6" height="1" fill="#6a6a78" opacity="0.5"/><rect x="53.3" y="61.8" width="2.5" height="1" fill="#6a6a78" opacity="0.5"/><rect x="56.8" y="61.8" width="2.8" height="1" fill="#6a6a78" opacity="0.5"/><rect x="60.6" y="61.8" width="6.7" height="1" fill="#6a6a78" opacity="0.5"/><rect x="68.3" y="61.8" width="4.3" height="1" fill="#6a6a78" opacity="0.5"/><rect x="73.6" y="61.8" width="5.4" height="1" fill="#6a6a78" opacity="0.5"/><rect x="3.0" y="64.1" width="4.4" height="1" fill="#6a6a78" opacity="0.5"/><rect x="8.4" y="64.1" width="2.6" height="1" fill="#6a6a78" opacity="0.5"/><rect x="12.0" y="64.1" width="4.2" height="1" fill="#6a6a78" opacity="0.5"/><rect x="17.2" y="64.1" width="6.1" height="1" fill="#6a6a78" opacity="0.5"/><rect x="24.2" y="64.1" width="6.5" height="1" fill="#6a6a78" opacity="0.5"/><rect x="31.8" y="64.1" width="4.4" height="1" fill="#6a6a78" opacity="0.5"/><rect x="37.1" y="64.1" width="3.6" height="1" fill="#6a6a78" opacity="0.5"/><rect x="41.7" y="64.1" width="3.0" height="1" fill="#6a6a78" opacity="0.5"/><rect x="45.7" y="64.1" width="5.1" height="1" fill="#6a6a78" opacity="0.5"/><rect x="51.8" y="64.1" width="6.6" height="1" fill="#6a6a78" opacity="0.5"/><rect x="59.4" y="64.1" width="2.6" height="1" fill="#6a6a78" opacity="0.5"/><rect x="63.0" y="64.1" width="5.9" height="1" fill="#6a6a78" opacity="0.5"/><rect x="69.9" y="64.1" width="2.1" height="1" fill="#6a6a78" opacity="0.5"/><rect x="3.0" y="66.4" width="2.1" height="1" fill="#6a6a78" opacity="0.5"/><rect x="6.1" y="66.4" width="3.4" height="1" fill="#6a6a78" opacity="0.5"/><rect x="10.5" y="66.4" width="5.6" height="1" fill="#6a6a78" opacity="0.5"/><rect x="17.1" y="66.4" width="3.2" height="1" fill="#6a6a78" opacity="0.5"/><rect x="21.3" y="66.4" width="4.5" height="1" fill="#6a6a78" opacity="0.5"/><rect x="26.8" y="66.4" width="4.5" height="1" fill="#6a6a78" opacity="0.5"/><rect x="32.3" y="66.4" width="4.9" height="1" fill="#6a6a78" opacity="0.5"/><rect x="38.2" y="66.4" width="6.3" height="1" fill="#6a6a78" opacity="0.5"/><rect x="45.5" y="66.4" width="5.1" height="1" fill="#6a6a78" opacity="0.5"/><rect x="51.6" y="66.4" width="5.6" height="1" fill="#6a6a78" opacity="0.5"/><rect x="58.2" y="66.4" width="5.5" height="1" fill="#6a6a78" opacity="0.5"/><rect x="64.7" y="66.4" width="2.3" height="1" fill="#6a6a78" opacity="0.5"/><rect x="3.0" y="68.7" width="4.1" height="1" fill="#6a6a78" opacity="0.5"/><rect x="8.1" y="68.7" width="4.6" height="1" fill="#6a6a78" opacity="0.5"/><rect x="13.7" y="68.7" width="2.8" height="1" fill="#6a6a78" opacity="0.5"/><rect x="17.5" y="68.7" width="3.0" height="1" fill="#6a6a78" opacity="0.5"/><rect x="21.5" y="68.7" width="5.2" height="1" fill="#6a6a78" opacity="0.5"/><rect x="27.7" y="68.7" width="5.2" height="1" fill="#6a6a78" opacity="0.5"/><rect x="33.9" y="68.7" width="4.6" height="1" fill="#6a6a78" opacity="0.5"/><rect x="39.5" y="68.7" width="6.3" height="1" fill="#6a6a78" opacity="0.5"/><rect x="46.8" y="68.7" width="5.1" height="1" fill="#6a6a78" opacity="0.5"/><rect x="52.8" y="68.7" width="6.3" height="1" fill="#6a6a78" opacity="0.5"/><rect x="60.1" y="68.7" width="0.9" height="1" fill="#6a6a78" opacity="0.5"/><rect x="3.0" y="71.0" width="6.5" height="1" fill="#6a6a78" opacity="0.5"/><rect x="10.5" y="71.0" width="3.6" height="1" fill="#6a6a78" opacity="0.5"/><rect x="15.1" y="71.0" width="3.6" height="1" fill="#6a6a78" opacity="0.5"/><rect x="19.7" y="71.0" width="6.6" height="1" fill="#6a6a78" opacity="0.5"/><rect x="27.3" y="71.0" width="3.1" height="1" fill="#6a6a78" opacity="0.5"/><rect x="31.4" y="71.0" width="7.0" height="1" fill="#6a6a78" opacity="0.5"/><rect x="39.4" y="71.0" width="6.4" height="1" fill="#6a6a78" opacity="0.5"/><rect x="46.8" y="71.0" width="2.7" height="1" fill="#6a6a78" opacity="0.5"/><rect x="50.5" y="71.0" width="3.2" height="1" fill="#6a6a78" opacity="0.5"/><rect x="54.7" y="71.0" width="5.6" height="1" fill="#6a6a78" opacity="0.5"/><rect x="61.3" y="71.0" width="3.3" height="1" fill="#6a6a78" opacity="0.5"/><rect x="65.6" y="71.0" width="2.5" height="1" fill="#6a6a78" opacity="0.5"/><rect x="69.1" y="71.0" width="6.2" height="1" fill="#6a6a78" opacity="0.5"/><rect x="76.2" y="71.0" width="4.1" height="1" fill="#6a6a78" opacity="0.5"/><rect x="3.0" y="73.3" width="5.1" height="1" fill="#6a6a78" opacity="0.5"/><rect x="9.1" y="73.3" width="6.0" height="1" fill="#6a6a78" opacity="0.5"/><rect x="16.1" y="73.3" width="2.5" height="1" fill="#6a6a78" opacity="0.5"/><rect x="19.6" y="73.3" width="4.8" height="1" fill="#6a6a78" opacity="0.5"/><rect x="25.5" y="73.3" width="3.8" height="1" fill="#6a6a78" opacity="0.5"/><rect x="30.3" y="73.3" width="6.1" height="1" fill="#6a6a78" opacity="0.5"/><rect x="37.4" y="73.3" width="3.8" height="1" fill="#6a6a78" opacity="0.5"/><rect x="42.2" y="73.3" width="5.5" height="1" fill="#6a6a78" opacity="0.5"/><rect x="48.7" y="73.3" width="5.2" height="1" fill="#6a6a78" opacity="0.5"/><rect x="54.9" y="73.3" width="3.7" height="1" fill="#6a6a78" opacity="0.5"/><rect x="59.6" y="73.3" width="5.4" height="1" fill="#6a6a78" opacity="0.5"/><rect x="3.0" y="75.6" width="4.4" height="1" fill="#6a6a78" opacity="0.5"/><rect x="8.4" y="75.6" width="2.1" height="1" fill="#6a6a78" opacity="0.5"/><rect x="11.5" y="75.6" width="5.8" height="1" fill="#6a6a78" opacity="0.5"/><rect x="18.3" y="75.6" width="5.1" height="1" fill="#6a6a78" opacity="0.5"/><rect x="24.4" y="75.6" width="6.5" height="1" fill="#6a6a78" opacity="0.5"/><rect x="31.9" y="75.6" width="4.4" height="1" fill="#6a6a78" opacity="0.5"/><rect x="37.3" y="75.6" width="2.9" height="1" fill="#6a6a78" opacity="0.5"/><rect x="41.3" y="75.6" width="2.6" height="1" fill="#6a6a78" opacity="0.5"/><rect x="44.9" y="75.6" width="2.9" height="1" fill="#6a6a78" opacity="0.5"/><rect x="48.7" y="75.6" width="2.8" height="1" fill="#6a6a78" opacity="0.5"/><rect x="52.5" y="75.6" width="3.4" height="1" fill="#6a6a78" opacity="0.5"/><rect x="56.9" y="75.6" width="5.4" height="1" fill="#6a6a78" opacity="0.5"/><rect x="63.3" y="75.6" width="3.7" height="1" fill="#6a6a78" opacity="0.5"/><rect x="3.0" y="77.9" width="4.3" height="1" fill="#6a6a78" opacity="0.5"/><rect x="8.3" y="77.9" width="5.8" height="1" fill="#6a6a78" opacity="0.5"/><rect x="15.1" y="77.9" width="3.6" height="1" fill="#6a6a78" opacity="0.5"/><rect x="19.8" y="77.9" width="4.3" height="1" fill="#6a6a78" opacity="0.5"/><rect x="25.1" y="77.9" width="4.6" height="1" fill="#6a6a78" opacity="0.5"/><rect x="30.7" y="77.9" width="4.2" height="1" fill="#6a6a78" opacity="0.5"/><rect x="35.8" y="77.9" width="5.0" height="1" fill="#6a6a78" opacity="0.5"/><rect x="41.8" y="77.9" width="2.1" height="1" fill="#6a6a78" opacity="0.5"/><rect x="44.9" y="77.9" width="5.5" height="1" fill="#6a6a78" opacity="0.5"/><rect x="51.4" y="77.9" width="6.2" height="1" fill="#6a6a78" opacity="0.5"/><rect x="58.6" y="77.9" width="2.9" height="1" fill="#6a6a78" opacity="0.5"/><rect x="62.5" y="77.9" width="2.5" height="1" fill="#6a6a78" opacity="0.5"/><rect x="3.0" y="80.2" width="3.0" height="1" fill="#6a6a78" opacity="0.5"/><rect x="7.0" y="80.2" width="2.8" height="1" fill="#6a6a78" opacity="0.5"/><rect x="10.8" y="80.2" width="4.6" height="1" fill="#6a6a78" opacity="0.5"/><rect x="16.4" y="80.2" width="2.1" height="1" fill="#6a6a78" opacity="0.5"/><rect x="19.4" y="80.2" width="6.5" height="1" fill="#6a6a78" opacity="0.5"/><rect x="26.9" y="80.2" width="6.0" height="1" fill="#6a6a78" opacity="0.5"/><rect x="33.9" y="80.2" width="5.5" height="1" fill="#6a6a78" opacity="0.5"/><rect x="40.4" y="80.2" width="6.3" height="1" fill="#6a6a78" opacity="0.5"/><rect x="47.7" y="80.2" width="5.1" height="1" fill="#6a6a78" opacity="0.5"/><rect x="53.9" y="80.2" width="4.0" height="1" fill="#6a6a78" opacity="0.5"/><rect x="58.9" y="80.2" width="5.0" height="1" fill="#6a6a78" opacity="0.5"/><rect x="64.9" y="80.2" width="4.5" height="1" fill="#6a6a78" opacity="0.5"/><rect x="70.4" y="80.2" width="1.6" height="1" fill="#6a6a78" opacity="0.5"/><rect x="3.0" y="82.5" width="2.6" height="1" fill="#6a6a78" opacity="0.5"/><rect x="6.6" y="82.5" width="5.7" height="1" fill="#6a6a78" opacity="0.5"/><rect x="13.3" y="82.5" width="2.8" height="1" fill="#6a6a78" opacity="0.5"/><rect x="17.1" y="82.5" width="6.7" height="1" fill="#6a6a78" opacity="0.5"/><rect x="24.8" y="82.5" width="2.7" height="1" fill="#6a6a78" opacity="0.5"/><rect x="28.4" y="82.5" width="3.6" height="1" fill="#6a6a78" opacity="0.5"/><rect x="33.1" y="82.5" width="4.7" height="1" fill="#6a6a78" opacity="0.5"/><rect x="38.8" y="82.5" width="3.8" height="1" fill="#6a6a78" opacity="0.5"/><rect x="43.6" y="82.5" width="4.2" height="1" fill="#6a6a78" opacity="0.5"/><rect x="48.8" y="82.5" width="2.9" height="1" fill="#6a6a78" opacity="0.5"/><rect x="52.7" y="82.5" width="3.0" height="1" fill="#6a6a78" opacity="0.5"/><rect x="56.7" y="82.5" width="2.9" height="1" fill="#6a6a78" opacity="0.5"/><rect x="60.6" y="82.5" width="6.0" height="1" fill="#6a6a78" opacity="0.5"/><rect x="67.6" y="82.5" width="1.4" height="1" fill="#6a6a78" opacity="0.5"/><rect x="3.0" y="84.8" width="7.0" height="1" fill="#6a6a78" opacity="0.5"/><rect x="11.0" y="84.8" width="6.5" height="1" fill="#6a6a78" opacity="0.5"/><rect x="18.5" y="84.8" width="2.2" height="1" fill="#6a6a78" opacity="0.5"/><rect x="21.7" y="84.8" width="3.4" height="1" fill="#6a6a78" opacity="0.5"/><rect x="26.1" y="84.8" width="2.9" height="1" fill="#6a6a78" opacity="0.5"/><rect x="3.0" y="87.1" width="5.3" height="1" fill="#6a6a78" opacity="0.5"/><rect x="9.3" y="87.1" width="4.8" height="1" fill="#6a6a78" opacity="0.5"/><rect x="15.1" y="87.1" width="4.7" height="1" fill="#6a6a78" opacity="0.5"/><rect x="20.8" y="87.1" width="3.9" height="1" fill="#6a6a78" opacity="0.5"/><rect x="25.8" y="87.1" width="7.0" height="1" fill="#6a6a78" opacity="0.5"/><rect x="33.8" y="87.1" width="5.2" height="1" fill="#6a6a78" opacity="0.5"/><rect x="40.0" y="87.1" width="5.5" height="1" fill="#6a6a78" opacity="0.5"/><rect x="46.5" y="87.1" width="5.8" height="1" fill="#6a6a78" opacity="0.5"/><rect x="53.3" y="87.1" width="6.9" height="1" fill="#6a6a78" opacity="0.5"/><rect x="61.2" y="87.1" width="2.1" height="1" fill="#6a6a78" opacity="0.5"/><rect x="64.3" y="87.1" width="5.1" height="1" fill="#6a6a78" opacity="0.5"/><rect x="3.0" y="89.4" width="4.0" height="1" fill="#6a6a78" opacity="0.5"/><rect x="8.0" y="89.4" width="2.3" height="1" fill="#6a6a78" opacity="0.5"/><rect x="11.3" y="89.4" width="3.0" height="1" fill="#6a6a78" opacity="0.5"/><rect x="15.2" y="89.4" width="3.9" height="1" fill="#6a6a78" opacity="0.5"/><rect x="20.1" y="89.4" width="2.5" height="1" fill="#6a6a78" opacity="0.5"/><rect x="23.6" y="89.4" width="3.3" height="1" fill="#6a6a78" opacity="0.5"/><rect x="27.9" y="89.4" width="6.5" height="1" fill="#6a6a78" opacity="0.5"/><rect x="35.4" y="89.4" width="4.8" height="1" fill="#6a6a78" opacity="0.5"/><rect x="41.1" y="89.4" width="4.5" height="1" fill="#6a6a78" opacity="0.5"/><rect x="46.7" y="89.4" width="6.8" height="1" fill="#6a6a78" opacity="0.5"/><rect x="54.5" y="89.4" width="4.8" height="1" fill="#6a6a78" opacity="0.5"/><rect x="60.4" y="89.4" width="7.0" height="1" fill="#6a6a78" opacity="0.5"/><rect x="3.0" y="91.7" width="5.2" height="1" fill="#6a6a78" opacity="0.5"/><rect x="9.2" y="91.7" width="4.7" height="1" fill="#6a6a78" opacity="0.5"/><rect x="15.0" y="91.7" width="5.3" height="1" fill="#6a6a78" opacity="0.5"/><rect x="21.3" y="91.7" width="6.8" height="1" fill="#6a6a78" opacity="0.5"/><rect x="29.1" y="91.7" width="3.9" height="1" fill="#6a6a78" opacity="0.5"/><rect x="34.0" y="91.7" width="6.7" height="1" fill="#6a6a78" opacity="0.5"/><rect x="41.7" y="91.7" width="3.9" height="1" fill="#6a6a78" opacity="0.5"/><rect x="46.6" y="91.7" width="6.9" height="1" fill="#6a6a78" opacity="0.5"/><rect x="54.5" y="91.7" width="6.3" height="1" fill="#6a6a78" opacity="0.5"/><rect x="61.8" y="91.7" width="4.7" height="1" fill="#6a6a78" opacity="0.5"/><rect x="67.5" y="91.7" width="5.0" height="1" fill="#6a6a78" opacity="0.5"/><rect x="73.5" y="91.7" width="4.1" height="1" fill="#6a6a78" opacity="0.5"/><rect x="78.6" y="91.7" width="2.4" height="1" fill="#6a6a78" opacity="0.5"/><rect x="80" y="0" width="0.8" height="94" fill="#b8b8b8"/><rect x="81" y="1.0" width="145" height="0.5" fill="#ededed"/><rect x="81" y="4.2" width="145" height="0.5" fill="#ededed"/><rect x="81" y="7.4" width="145" height="0.5" fill="#ededed"/><rect x="81" y="10.6" width="145" height="0.5" fill="#ededed"/><rect x="81" y="13.8" width="145" height="0.5" fill="#ededed"/><rect x="81" y="17.0" width="145" height="0.5" fill="#ededed"/><rect x="81" y="20.2" width="145" height="0.5" fill="#ededed"/><rect x="81" y="23.4" width="145" height="0.5" fill="#ededed"/><rect x="81" y="26.6" width="145" height="0.5" fill="#ededed"/><rect x="81" y="29.8" width="145" height="0.5" fill="#ededed"/><rect x="81" y="33.0" width="145" height="0.5" fill="#ededed"/><rect x="81" y="36.2" width="145" height="0.5" fill="#ededed"/><rect x="81" y="39.4" width="145" height="0.5" fill="#ededed"/><rect x="81" y="42.6" width="145" height="0.5" fill="#ededed"/><rect x="81" y="45.8" width="145" height="0.5" fill="#ededed"/><rect x="81" y="49.0" width="145" height="0.5" fill="#ededed"/><rect x="81" y="52.2" width="145" height="0.5" fill="#ededed"/><rect x="81" y="55.4" width="145" height="0.5" fill="#ededed"/><rect x="81" y="58.6" width="145" height="0.5" fill="#ededed"/><rect x="81" y="61.8" width="145" height="0.5" fill="#ededed"/><rect x="81" y="65.0" width="145" height="0.5" fill="#ededed"/><rect x="81" y="68.2" width="145" height="0.5" fill="#ededed"/><rect x="81" y="71.4" width="145" height="0.5" fill="#ededed"/><rect x="81" y="74.6" width="145" height="0.5" fill="#ededed"/><rect x="81" y="77.8" width="145" height="0.5" fill="#ededed"/><rect x="81" y="81.0" width="145" height="0.5" fill="#ededed"/><rect x="81" y="84.2" width="145" height="0.5" fill="#ededed"/><rect x="81" y="87.4" width="145" height="0.5" fill="#ededed"/><rect x="81" y="90.6" width="145" height="0.5" fill="#ededed"/><rect x="81" y="93.8" width="145" height="0.5" fill="#ededed"/><rect x="81.0" y="0" width="0.5" height="94" fill="#f0f0f0"/><rect x="86.2" y="0" width="0.5" height="94" fill="#f0f0f0"/><rect x="91.4" y="0" width="0.5" height="94" fill="#f0f0f0"/><rect x="96.6" y="0" width="0.5" height="94" fill="#f0f0f0"/><rect x="101.8" y="0" width="0.5" height="94" fill="#f0f0f0"/><rect x="107.0" y="0" width="0.5" height="94" fill="#f0f0f0"/><rect x="112.2" y="0" width="0.5" height="94" fill="#f0f0f0"/><rect x="117.4" y="0" width="0.5" height="94" fill="#f0f0f0"/><rect x="122.6" y="0" width="0.5" height="94" fill="#f0f0f0"/><rect x="127.8" y="0" width="0.5" height="94" fill="#f0f0f0"/><rect x="133.0" y="0" width="0.5" height="94" fill="#f0f0f0"/><rect x="138.2" y="0" width="0.5" height="94" fill="#f0f0f0"/><rect x="143.4" y="0" width="0.5" height="94" fill="#f0f0f0"/><rect x="148.6" y="0" width="0.5" height="94" fill="#f0f0f0"/><rect x="153.8" y="0" width="0.5" height="94" fill="#f0f0f0"/><rect x="159.0" y="0" width="0.5" height="94" fill="#f0f0f0"/><rect x="164.2" y="0" width="0.5" height="94" fill="#f0f0f0"/><rect x="169.4" y="0" width="0.5" height="94" fill="#f0f0f0"/><rect x="174.6" y="0" width="0.5" height="94" fill="#f0f0f0"/><rect x="179.8" y="0" width="0.5" height="94" fill="#f0f0f0"/><rect x="185.0" y="0" width="0.5" height="94" fill="#f0f0f0"/><rect x="190.2" y="0" width="0.5" height="94" fill="#f0f0f0"/><rect x="195.4" y="0" width="0.5" height="94" fill="#f0f0f0"/><rect x="200.6" y="0" width="0.5" height="94" fill="#f0f0f0"/><rect x="205.8" y="0" width="0.5" height="94" fill="#f0f0f0"/><rect x="211.0" y="0" width="0.5" height="94" fill="#f0f0f0"/><rect x="216.2" y="0" width="0.5" height="94" fill="#f0f0f0"/><rect x="221.4" y="0" width="0.5" height="94" fill="#f0f0f0"/></svg>
<svg style="left:233px;top:197px;" width="15" height="15" viewBox="0 0 15 15"><path d="M6 1.5 H3 Q1 1.5 1 3.5 V12 Q1 14 3 14 H11.5 Q13.5 14 13.5 12 V9" fill="none" stroke="#6ccff8" stroke-width="1.1"/><path d="M8.5 1 H14 V6.5 M14 1 L7 8" fill="none" stroke="#6ccff8" stroke-width="1.1"/></svg>
<div class="t" style="left:263px;top:191.84px;font-size:12px;color:#fff;font-weight:normal;">You recently opened</div>
<div class="t" style="left:263px;top:207.84px;font-size:12px;color:#cfcfcf;font-weight:normal;">11/2/2025 11:07 AM</div>
<svg style="left:230px;top:337px;" width="20" height="20" viewBox="0 0 20 20"><path d="M7 1 H15 L19 5 V18 Q19 19 18 19 H8 Q7 19 7 18 Z" fill="#fff"/><path d="M15 1 V5 H19" fill="#ddd"/><path d="M10 8 H17 M10 11 H17 M10 14 H17 M13.5 7 V16" stroke="#1f7a45" stroke-width="0.9"/><rect x="1" y="4" width="9" height="9" rx="1" fill="#1d6f42"/><path d="M3 6 L8 11 M8 6 L3 11" stroke="#fff" stroke-width="1.2"/><rect x="0" y="12" width="7" height="7" fill="#fff"/><path d="M1.5 17.5 L5.5 13.5 M3 13.5 H5.5 V16" fill="none" stroke="#2a7bd8" stroke-width="1.1"/></svg>
<div class="t" style="left:263px;top:333.84px;font-size:12px;color:#fff;font-weight:bold;letter-spacing:-0.4px">2024 HOTS Survey Associate R...</div>
<div class="t" style="left:263px;top:349.84px;font-size:12px;color:#cfcfcf;font-weight:normal;letter-spacing:-0.12px">SharePoint - Contact Center</div>
<svg style="left:184px;top:407px;" width="12" height="7" viewBox="0 0 12 7"><path d="M0.6 0.6 L6 6 L11.4 0.6" fill="none" stroke="#fff" stroke-width="1.1"/></svg>
<div class="a" style="left:214px;top:395px;width:90px;height:31px;background:#4cc2ff;border-radius:15.5px"></div>
<svg style="left:226px;top:402px;" width="17" height="17" viewBox="0 0 17 17"><circle cx="8.5" cy="8.5" r="7.3" fill="none" stroke="#1a1a1a" stroke-width="1.2"/><path d="M8.5 4 V9 H12" fill="none" stroke="#1a1a1a" stroke-width="1.2"/></svg>
<div class="t" style="left:250px;top:404.00px;font-size:13px;color:#111;font-weight:normal;">Recent</div>
<div class="a" style="left:313px;top:395px;width:101px;height:31px;background:#272727;border-radius:15.5px"></div>
<svg style="left:324px;top:402px;" width="17" height="17" viewBox="0 0 17 17"><path d="M8.5 1 L10.8 5.9 L16 6.5 L12.1 10.1 L13.2 15.4 L8.5 12.7 L3.8 15.4 L4.9 10.1 L1 6.5 L6.2 5.9 Z" fill="none" stroke="#fff" stroke-width="1.1" stroke-linejoin="round"/></svg>
<div class="t" style="left:348px;top:404.00px;font-size:13px;color:#fff;font-weight:normal;">Favorites</div>
<div class="a" style="left:424px;top:395px;width:90px;height:31px;background:#272727;border-radius:15.5px"></div>
<svg style="left:434px;top:402px;" width="17" height="16" viewBox="0 0 17 16"><circle cx="5.8" cy="3.9" r="3.2" fill="none" stroke="#fff" stroke-width="1.1"/><path d="M0.6 11 Q0.6 8.8 2.8 8.8 H8.8 Q11 8.8 11 11 V11.5 Q11 15.4 5.8 15.4 Q0.6 15.4 0.6 11.5 Z" fill="none" stroke="#fff" stroke-width="1.1"/><circle cx="13.2" cy="5.2" r="2.3" fill="none" stroke="#fff" stroke-width="1.1"/><path d="M12.3 9.3 H14.3 Q16.4 9.3 16.4 11.4 Q16.4 14.4 12.6 14.6" fill="none" stroke="#fff" stroke-width="1.1"/></svg>
<div class="t" style="left:459px;top:404.00px;font-size:13px;color:#fff;font-weight:normal;">Shared</div>
<div class="t" style="left:245px;top:444.57px;font-size:13.5px;color:#fff;font-weight:normal;">Name</div>
<div class="t" style="left:826px;top:444.83px;font-size:13.2px;color:#fff;font-weight:normal;">Date accessed</div>
<div class="t" style="left:1186px;top:444.66px;font-size:13.4px;color:#fff;font-weight:normal;">File location</div>
<div class="t" style="left:1546px;top:444.83px;font-size:13.2px;color:#fff;font-weight:normal;">Activity</div>
<svg style="left:250px;top:490px;" width="24" height="18" viewBox="0 0 24 18"><rect width="24" height="18" fill="#8a9cc4"/><rect x="0" y="0" width="24" height="0.8" fill="#c0c8d8"/><rect x="1" y="1" width="21" height="2" fill="#2a5ab8"/><rect x="3" y="1" width="4" height="1.5" fill="#1a2040"/><rect x="0" y="3" width="23" height="9.8" fill="#3a9a5a"/><rect x="1.3" y="5" width="19.8" height="6.2" fill="#08088e"/><rect x="1.3" y="11" width="19.8" height="1" fill="#181828"/><rect x="22.5" y="7.5" width="1.5" height="2.5" fill="#e8e8f0"/><rect x="0" y="13" width="24" height="5" fill="#6a88c0"/><rect x="1" y="13.5" width="5" height="1.5" fill="#2a4a90"/><rect x="1" y="15.5" width="10" height="1.5" fill="#4a5070"/><rect x="15" y="14" width="2" height="2.5" fill="#1a3a80"/></svg>
<div class="t" style="left:286px;top:493.84px;font-size:12px;color:#ffffff;font-weight:normal;letter-spacing:-0.1px">Screenshot 2025-11-03 144554</div>
<div class="t" style="left:826px;top:493.84px;font-size:12px;color:#d6d6d6;font-weight:normal;">11/3/2025 2:46 PM</div>
<div class="t" style="left:1186px;top:493.84px;font-size:12px;color:#d6d6d6;font-weight:normal;letter-spacing:-0.2px">Pictures\Screenshots</div>
<svg style="left:250px;top:524px;" width="24" height="19" viewBox="0 0 24 19"><rect width="24" height="19" fill="#fdfdfd"/><rect x="0" y="0" width="24" height="0.6" fill="#c8b8b0"/><rect x="1.5" y="2" width="12" height="0.7" fill="#a8c8f0"/><rect x="1.5" y="3.2" width="19" height="0.5" fill="#d8d8e0"/><rect x="1.5" y="5.5" width="4" height="0.6" fill="#c8c8c8"/><rect x="1.5" y="7.5" width="9" height="0.5" fill="#d0d0d0"/><rect x="1.5" y="10" width="8" height="0.6" fill="#c0d8f0"/><rect x="1.5" y="17.5" width="22" height="0.6" fill="#e0e0e0"/></svg>
<div class="t" style="left:286px;top:527.84px;font-size:12px;color:#ffffff;font-weight:normal;letter-spacing:-0.1px">choose which media to use screen</div>
<div class="t" style="left:826px;top:527.84px;font-size:12px;color:#d6d6d6;font-weight:normal;">11/3/2025 2:15 PM</div>
<div class="t" style="left:1186px;top:527.84px;font-size:12px;color:#d6d6d6;font-weight:normal;letter-spacing:-0.2px">Pictures\Screenshots</div>
<svg style="left:250px;top:558px;" width="24" height="19" viewBox="0 0 24 19"><rect width="24" height="19" fill="#fdfdfd"/><rect x="0" y="0" width="24" height="0.6" fill="#c8b8b0"/><rect x="1.5" y="2" width="12" height="0.7" fill="#a8c8f0"/><rect x="1.5" y="3.2" width="19" height="0.5" fill="#d8d8e0"/><rect x="1.5" y="5.5" width="4" height="0.6" fill="#c8c8c8"/><rect x="1.5" y="7.5" width="9" height="0.5" fill="#d0d0d0"/><rect x="1.5" y="10" width="8" height="0.6" fill="#c0d8f0"/><rect x="1.5" y="17.5" width="22" height="0.6" fill="#e0e0e0"/></svg>
<div class="t" style="left:286px;top:561.84px;font-size:12px;color:#ffffff;font-weight:normal;letter-spacing:-0.1px">Screenshot 2025-11-03 141524</div>
<div class="t" style="left:826px;top:561.84px;font-size:12px;color:#d6d6d6;font-weight:normal;">11/3/2025 2:15 PM</div>
<div class="t" style="left:1186px;top:561.84px;font-size:12px;color:#d6d6d6;font-weight:normal;letter-spacing:-0.2px">Pictures\Screenshots</div>
<svg style="left:250px;top:592px;" width="24" height="19" viewBox="0 0 24 19"><rect width="24" height="19" fill="#fdfdfd"/><rect x="0" y="0" width="24" height="0.6" fill="#c8b8b0"/><rect x="1.5" y="2" width="12" height="0.7" fill="#a8c8f0"/><rect x="1.5" y="3.2" width="19" height="0.5" fill="#d8d8e0"/><rect x="1.5" y="5.5" width="4" height="0.6" fill="#c8c8c8"/><rect x="1.5" y="7.5" width="9" height="0.5" fill="#d0d0d0"/><rect x="1.5" y="10" width="8" height="0.6" fill="#c0d8f0"/><rect x="1.5" y="17.5" width="22" height="0.6" fill="#e0e0e0"/></svg>
<div class="t" style="left:286px;top:595.84px;font-size:12px;color:#ffffff;font-weight:normal;letter-spacing:-0.065px">select language and edition screen</div>
<div class="t" style="left:826px;top:595.84px;font-size:12px;color:#d6d6d6;font-weight:normal;">11/3/2025 2:14 PM</div>
<div class="t" style="left:1186px;top:595.84px;font-size:12px;color:#d6d6d6;font-weight:normal;letter-spacing:-0.2px">Pictures\Screenshots</div>
<svg style="left:250px;top:626px;" width="24" height="19" viewBox="0 0 24 19"><rect width="24" height="19" fill="#fdfdfd"/><rect x="0" y="0" width="24" height="0.6" fill="#c8b8b0"/><rect x="1.5" y="2" width="12" height="0.7" fill="#a8c8f0"/><rect x="1.5" y="3.2" width="19" height="0.5" fill="#d8d8e0"/><rect x="1.5" y="5.5" width="4" height="0.6" fill="#c8c8c8"/><rect x="1.5" y="7.5" width="9" height="0.5" fill="#d0d0d0"/><rect x="1.5" y="10" width="8" height="0.6" fill="#c0d8f0"/><rect x="1.5" y="17.5" width="22" height="0.6" fill="#e0e0e0"/></svg>
<div class="t" style="left:286px;top:629.84px;font-size:12px;color:#ffffff;font-weight:normal;letter-spacing:-0.1px">Screenshot 2025-11-03 141427</div>
<div class="t" style="left:826px;top:629.84px;font-size:12px;color:#d6d6d6;font-weight:normal;">11/3/2025 2:14 PM</div>
<div class="t" style="left:1186px;top:629.84px;font-size:12px;color:#d6d6d6;font-weight:normal;letter-spacing:-0.2px">Pictures\Screenshots</div>
<svg style="left:250px;top:660px;" width="24" height="19" viewBox="0 0 24 19"><rect width="24" height="19" fill="#f4f4f4"/><rect x="2" y="2" width="16" height="1" fill="#7aa8e0"/><rect x="2" y="5.0" width="12" height="0.9" fill="#888"/><rect x="2" y="6.8" width="18" height="0.9" fill="#888"/><rect x="2" y="8.6" width="18" height="0.9" fill="#888"/><rect x="2" y="10.4" width="12" height="0.9" fill="#888"/><rect x="2" y="12.2" width="18" height="0.9" fill="#888"/><rect x="2" y="14.0" width="18" height="0.9" fill="#888"/><rect x="19" y="15" width="4" height="2" fill="#e06060"/></svg>
<div class="t" style="left:286px;top:663.84px;font-size:12px;color:#ffffff;font-weight:normal;letter-spacing:0.075px">Windows media creation tool with accept highlighted</div>
<div class="t" style="left:826px;top:663.84px;font-size:12px;color:#d6d6d6;font-weight:normal;">11/3/2025 2:13 PM</div>
<div class="t" style="left:1186px;top:663.84px;font-size:12px;color:#d6d6d6;font-weight:normal;letter-spacing:-0.2px">Pictures\Screenshots</div>
<svg style="left:250px;top:694px;" width="24" height="19" viewBox="0 0 24 19"><rect width="24" height="19" fill="#f4f4f4"/><rect x="2" y="2" width="16" height="1" fill="#7aa8e0"/><rect x="2" y="5.0" width="12" height="0.9" fill="#888"/><rect x="2" y="6.8" width="18" height="0.9" fill="#888"/><rect x="2" y="8.6" width="18" height="0.9" fill="#888"/><rect x="2" y="10.4" width="12" height="0.9" fill="#888"/><rect x="2" y="12.2" width="18" height="0.9" fill="#888"/><rect x="2" y="14.0" width="18" height="0.9" fill="#888"/><rect x="19" y="15" width="4" height="2" fill="#e06060"/></svg>
<div class="t" style="left:286px;top:697.84px;font-size:12px;color:#ffffff;font-weight:normal;letter-spacing:-0.1px">Screenshot 2025-11-03 141236</div>
<div class="t" style="left:826px;top:697.84px;font-size:12px;color:#d6d6d6;font-weight:normal;">11/3/2025 2:12 PM</div>
<div class="t" style="left:1186px;top:697.84px;font-size:12px;color:#d6d6d6;font-weight:normal;letter-spacing:-0.2px">Pictures\Screenshots</div>
<svg style="left:250px;top:731px;" width="24" height="13" viewBox="0 0 24 13"><rect width="24" height="13" fill="#1c2230"/><rect x="0" y="0" width="24" height="1" fill="#2a3a5a"/><rect x="3" y="3" width="8" height="1" fill="#8898b0"/><rect x="17" y="2" width="5" height="4" fill="#5a8ad8"/><rect x="3" y="8" width="12" height="1" fill="#55657a"/><rect x="3" y="11" width="3" height="1" fill="#2a8ae8"/></svg>
<div class="t" style="left:286px;top:731.84px;font-size:12px;color:#ffffff;font-weight:normal;letter-spacing:0.13px">Windows download page with media creation tool download button highlighted</div>
<div class="t" style="left:826px;top:731.84px;font-size:12px;color:#d6d6d6;font-weight:normal;">11/3/2025 2:08 PM</div>
<div class="t" style="left:1186px;top:731.84px;font-size:12px;color:#d6d6d6;font-weight:normal;letter-spacing:-0.2px">Pictures\Screenshots</div>
<svg style="left:250px;top:765px;" width="24" height="13" viewBox="0 0 24 13"><rect width="24" height="13" fill="#1c2230"/><rect x="0" y="0" width="24" height="1" fill="#2a3a5a"/><rect x="3" y="3" width="8" height="1" fill="#8898b0"/><rect x="17" y="2" width="5" height="4" fill="#5a8ad8"/><rect x="3" y="8" width="12" height="1" fill="#55657a"/><rect x="3" y="11" width="3" height="1" fill="#2a8ae8"/></svg>
<div class="t" style="left:286px;top:765.84px;font-size:12px;color:#ffffff;font-weight:normal;letter-spacing:-0.1px">Screenshot 2025-11-03 122523</div>
<div class="t" style="left:826px;top:765.84px;font-size:12px;color:#d6d6d6;font-weight:normal;">11/3/2025 12:25 PM</div>
<div class="t" style="left:1186px;top:765.84px;font-size:12px;color:#d6d6d6;font-weight:normal;letter-spacing:-0.2px">Pictures\Screenshots</div>
<svg style="left:250px;top:794px;" width="24" height="22" viewBox="0 0 24 22"><rect width="24" height="22" fill="#f8f8fc"/><rect x="0" y="0" width="24" height="11" fill="#e8e6f8"/><rect x="1" y="2.5" width="11" height="2" fill="none" stroke="#e06070" stroke-width="0.5"/><rect x="1.5" y="5.5" width="8" height="1" fill="#c8c8d8"/><rect x="16.5" y="2.5" width="6.5" height="6.5" fill="#3a1a90"/><rect x="18" y="4" width="3" height="2" fill="#8a5ae0"/><rect x="16" y="13.5" width="8" height="2" fill="#e8a030"/><rect x="1.5" y="12" width="12" height="0.6" fill="#bbb"/><rect x="1.5" y="14" width="10" height="0.6" fill="#c8c8c8"/><rect x="16" y="17.5" width="5" height="0.8" fill="#bbb"/><rect x="15" y="20.5" width="9" height="1" fill="#e88050"/></svg>
<div class="t" style="left:286px;top:799.84px;font-size:12px;color:#ffffff;font-weight:normal;letter-spacing:0.07px">ddu with clean and restart highlighted</div>
<div class="t" style="left:826px;top:799.84px;font-size:12px;color:#d6d6d6;font-weight:normal;">11/3/2025 11:54 AM</div>
<div class="t" style="left:1186px;top:799.84px;font-size:12px;color:#d6d6d6;font-weight:normal;letter-spacing:-0.2px">Pictures\Screenshots</div>
<svg style="left:250px;top:828px;" width="24" height="22" viewBox="0 0 24 22"><rect width="24" height="22" fill="#f8f8fc"/><rect x="0" y="0" width="24" height="11" fill="#e8e6f8"/><rect x="1" y="2.5" width="11" height="2" fill="none" stroke="#e06070" stroke-width="0.5"/><rect x="1.5" y="5.5" width="8" height="1" fill="#c8c8d8"/><rect x="16.5" y="2.5" width="6.5" height="6.5" fill="#3a1a90"/><rect x="18" y="4" width="3" height="2" fill="#8a5ae0"/><rect x="16" y="13.5" width="8" height="2" fill="#e8a030"/><rect x="1.5" y="12" width="12" height="0.6" fill="#bbb"/><rect x="1.5" y="14" width="10" height="0.6" fill="#c8c8c8"/><rect x="16" y="17.5" width="5" height="0.8" fill="#bbb"/><rect x="15" y="20.5" width="9" height="1" fill="#e88050"/></svg>
<div class="t" style="left:286px;top:833.84px;font-size:12px;color:#ffffff;font-weight:normal;letter-spacing:-0.1px">Screenshot 2025-11-03 115337</div>
<div class="t" style="left:826px;top:833.84px;font-size:12px;color:#d6d6d6;font-weight:normal;">11/3/2025 11:53 AM</div>
<div class="t" style="left:1186px;top:833.84px;font-size:12px;color:#d6d6d6;font-weight:normal;letter-spacing:-0.2px">Pictures\Screenshots</div>
<svg style="left:250px;top:862px;" width="24" height="22" viewBox="0 0 24 22"><rect width="24" height="22" fill="#fafafa"/><rect x="0" y="0" width="24" height="0.6" fill="#c8b0a8"/><rect x="1.5" y="2" width="9" height="5" fill="#ececec"/><rect x="16" y="8.5" width="7.5" height="3.5" fill="none" stroke="#e05050" stroke-width="0.6"/><rect x="16.5" y="9.5" width="6" height="0.7" fill="#7aa8e0"/><rect x="16" y="13" width="8" height="2" fill="#e8a030"/><rect x="1.5" y="11" width="10" height="0.6" fill="#bbb"/><rect x="1.5" y="13" width="12" height="0.6" fill="#c8c8c8"/><rect x="16" y="17.5" width="5" height="0.8" fill="#bbb"/><rect x="15" y="20.5" width="9" height="1" fill="#e88050"/></svg>
<div class="t" style="left:286px;top:867.84px;font-size:12px;color:#ffffff;font-weight:normal;letter-spacing:0.16px">ddu with driver type dropdown highlighted</div>
<div class="t" style="left:826px;top:867.84px;font-size:12px;color:#d6d6d6;font-weight:normal;">11/3/2025 11:52 AM</div>
<div class="t" style="left:1186px;top:867.84px;font-size:12px;color:#d6d6d6;font-weight:normal;letter-spacing:-0.2px">Pictures\Screenshots</div>
<svg style="left:250px;top:896px;" width="24" height="22" viewBox="0 0 24 22"><rect width="24" height="22" fill="#fafafa"/><rect x="0" y="0" width="24" height="0.6" fill="#c8b0a8"/><rect x="1.5" y="2" width="9" height="5" fill="#ececec"/><rect x="16" y="8.5" width="7.5" height="3.5" fill="none" stroke="#e05050" stroke-width="0.6"/><rect x="16.5" y="9.5" width="6" height="0.7" fill="#7aa8e0"/><rect x="16" y="13" width="8" height="2" fill="#e8a030"/><rect x="1.5" y="11" width="10" height="0.6" fill="#bbb"/><rect x="1.5" y="13" width="12" height="0.6" fill="#c8c8c8"/><rect x="16" y="17.5" width="5" height="0.8" fill="#bbb"/><rect x="15" y="20.5" width="9" height="1" fill="#e88050"/></svg>
<div class="t" style="left:286px;top:901.84px;font-size:12px;color:#ffffff;font-weight:normal;letter-spacing:-0.1px">Screenshot 2025-11-03 115209</div>
<div class="t" style="left:826px;top:901.84px;font-size:12px;color:#d6d6d6;font-weight:normal;">11/3/2025 11:52 AM</div>
<div class="t" style="left:1186px;top:901.84px;font-size:12px;color:#d6d6d6;font-weight:normal;letter-spacing:-0.2px">Pictures\Screenshots</div>
<svg style="left:250px;top:936px;" width="24" height="10" viewBox="0 0 24 10"><rect width="24" height="10" fill="#f6f6f6"/><rect x="0" y="0" width="24" height="1" fill="#999"/><rect x="2" y="4" width="2" height="2" fill="#2a5ad0"/><rect x="5" y="4" width="15" height="1" fill="#888"/><rect x="5" y="6" width="6" height="1" fill="#aaa"/><rect x="19" y="8" width="4" height="1.5" fill="#e05050"/></svg>
<div class="t" style="left:286px;top:935.84px;font-size:12px;color:#ffffff;font-weight:normal;letter-spacing:0.15px">ddu safe mode window with ok button highlighted</div>
<div class="t" style="left:826px;top:935.84px;font-size:12px;color:#d6d6d6;font-weight:normal;">11/3/2025 11:51 AM</div>
<div class="t" style="left:1186px;top:935.84px;font-size:12px;color:#d6d6d6;font-weight:normal;letter-spacing:-0.2px">Pictures\Screenshots</div>
<svg style="left:250px;top:970px;" width="24" height="10" viewBox="0 0 24 10"><rect width="24" height="10" fill="#f6f6f6"/><rect x="0" y="0" width="24" height="1" fill="#999"/><rect x="2" y="4" width="2" height="2" fill="#2a5ad0"/><rect x="5" y="4" width="15" height="1" fill="#888"/><rect x="5" y="6" width="6" height="1" fill="#aaa"/><rect x="19" y="8" width="4" height="1.5" fill="#e05050"/></svg>
<div class="t" style="left:286px;top:969.84px;font-size:12px;color:#ffffff;font-weight:normal;letter-spacing:-0.1px">Screenshot 2025-11-03 115040</div>
<div class="t" style="left:826px;top:969.84px;font-size:12px;color:#d6d6d6;font-weight:normal;">11/3/2025 11:50 AM</div>
<div class="t" style="left:1186px;top:969.84px;font-size:12px;color:#d6d6d6;font-weight:normal;letter-spacing:-0.2px">Pictures\Screenshots</div>
<div class="a" style="left:159px;top:990px;width:1760px;height:17.3px;overflow:hidden">
<svg style="left:95px;top:7px;" width="16" height="14" viewBox="0 0 16 14"><rect width="16" height="14" fill="#f6f6f6"/><rect x="2" y="3" width="8" height="1" fill="#999"/><rect x="2" y="6" width="10" height="1" fill="#aaa"/></svg>
<div class="t" style="left:127px;top:13.84px;font-size:12px;color:#ffffff;font-weight:normal;letter-spacing:0.13px">ddu options window with close button highlighted</div>
<div class="t" style="left:667px;top:13.84px;font-size:12px;color:#d6d6d6;font-weight:normal;">11/3/2025 11:50 AM</div>
<div class="t" style="left:1027px;top:13.84px;font-size:12px;color:#d6d6d6;font-weight:normal;letter-spacing:-0.2px">Pictures\Screenshots</div>
</div>
<div class="t" style="left:14px;top:1013.84px;font-size:12px;color:#d8d8d8;font-weight:normal;">98 items</div>
<div class="a" style="left:68px;top:1014px;width:1px;height:12px;background:#e0e0e0;"></div>
<svg style="left:21px;top:1045px;" width="20" height="20" viewBox="0 0 20 20"><defs><linearGradient id="sun" x1="0" y1="0" x2="1" y2="1"><stop offset="0" stop-color="#f8c420"/><stop offset="1" stop-color="#f26a0c"/></linearGradient></defs><circle cx="10" cy="10" r="9.7" fill="url(#sun)"/></svg>
<svg style="left:30px;top:1038px;" width="16" height="16" viewBox="0 0 16 16"><circle cx="8" cy="8" r="8" fill="#f5a3b3"/></svg>
<div class="t" style="left:34.6px;top:1040.86px;font-size:10.8px;color:#000;font-weight:normal;">5</div>
<div class="t" style="left:50px;top:1043.27px;font-size:11.5px;color:#fff;font-weight:bold;">56°F</div>
<div class="t" style="left:50px;top:1059.27px;font-size:11.5px;color:#dcdcdc;font-weight:normal;">Sunny</div>
<svg style="left:529px;top:1045px;" width="24" height="24" viewBox="0 0 24 24"><defs><linearGradient id="win" x1="0" y1="0" x2="1" y2="1"><stop offset="0" stop-color="#7ad8fa"/><stop offset="1" stop-color="#0d8fe8"/></linearGradient></defs><path d="M0 1.5 Q0 0 1.5 0 H11.3 V11.3 H0 Z M12.7 0 H22.5 Q24 0 24 1.5 V11.3 H12.7 Z M0 12.7 H11.3 V24 H1.5 Q0 24 0 22.5 Z M12.7 12.7 H24 V22.5 Q24 24 22.5 24 H12.7 Z" fill="url(#win)"/></svg>
<div class="a" style="left:565px;top:1040px;width:220px;height:32px;background:linear-gradient(90deg,#4c4132 0%,#524737 60%,#4e4334 100%);border-radius:16px;border:1px solid #5a4f40"></div>
<svg style="left:577px;top:1048px;" width="15" height="16" viewBox="0 0 15 16"><circle cx="6" cy="6" r="5" fill="none" stroke="#e0dcd6" stroke-width="1.6"/><path d="M9.5 9.5 L14 14" stroke="#e0dcd6" stroke-width="1.8" stroke-linecap="round"/></svg>
<div class="t" style="left:602px;top:1050.00px;font-size:13px;color:#d9d4ce;font-weight:normal;">Search</div>
<svg style="left:797px;top:1045px;" width="25" height="23" viewBox="0 0 25 23"><rect x="7" y="0" width="18" height="16" rx="1.5" fill="#f2f2f2"/><rect x="0" y="7" width="18" height="16" rx="1.5" fill="#6a6a6a" opacity="0.95"/><rect x="7" y="7" width="11" height="9" fill="#c9c9c9"/></svg>
<svg style="left:841px;top:1044px;" width="25" height="18" viewBox="0 0 25 18"><defs><linearGradient id="cpl" x1="0" y1="0" x2="0" y2="1"><stop offset="0" stop-color="#1aa0f8"/><stop offset="0.5" stop-color="#30b090"/><stop offset="1" stop-color="#f8d010"/></linearGradient><linearGradient id="cpr" x1="0" y1="0" x2="0" y2="1"><stop offset="0" stop-color="#b050f0"/><stop offset="1" stop-color="#f86090"/></linearGradient><linearGradient id="cpt" x1="0" y1="0" x2="1" y2="0"><stop offset="0" stop-color="#1890f0"/><stop offset="1" stop-color="#1838c8"/></linearGradient></defs><path d="M6 0.5 H14 Q16.5 0.5 17.5 3 L18.5 5 H13 Z" fill="url(#cpt)"/><path d="M0.2 14 L4 3 Q5 0.5 7.5 0.5 H12.5 Q14.5 0.5 13.8 2.5 L9.3 15 Q8.5 17 6.5 17 H2 Q-0.4 17 0.2 14 Z" fill="url(#cpl)"/><path d="M11.5 15 L14.5 6.5 Q15.3 4.2 17.5 4.2 H22.5 Q24.6 4.2 24.1 6.5 L21.3 15.3 Q20.6 17 18.8 17 H13.3 Q11 17 11.5 15 Z" fill="url(#cpr)"/></svg>
<div class="a" style="left:846px;top:1061.5px;width:19px;height:6.5px;background:#0a0a0a;border-radius:1px"></div>
<div class="t" style="left:847.2px;top:1061.41px;font-size:7.2px;color:#fff;font-weight:bold;letter-spacing:-0.1px">M365</div>
<div class="a" style="left:877px;top:1036px;width:35px;height:40px;background:#3e3427;border-radius:5px;border:1px solid #4a3f32"></div>
<div class="a" style="left:912px;top:1037px;width:3px;height:38px;background:#3a3025;border-radius:0 4px 4px 0"></div>
<svg style="left:885px;top:1045px;" width="24" height="22" viewBox="0 0 24 22"><path d="M0 2 Q0 0 2 0 H8 L10 2.5 H22 Q24 2.5 24 4.5 V20 Q24 22 22 22 H2 Q0 22 0 20 Z" fill="#f0b429"/><path d="M0 5 H24 V20 Q24 22 22 22 H2 Q0 22 0 20 Z" fill="#ffd452"/><rect x="5" y="14.5" width="14" height="7.5" rx="1.5" fill="#1e7fd0"/><rect x="7" y="16" width="10" height="2" fill="#4aa8f0"/></svg>
<div class="a" style="left:889px;top:1072px;width:16px;height:3px;background:#5cc8fa;border-radius:1.5px"></div>
<svg style="left:929px;top:1044px;" width="25" height="25" viewBox="0 0 25 25"><defs><linearGradient id="ed1" x1="0" y1="0" x2="1" y2="0.6"><stop offset="0" stop-color="#1a8ee0"/><stop offset="0.5" stop-color="#2ac0d8"/><stop offset="1" stop-color="#58e070"/></linearGradient><linearGradient id="ed2" x1="0" y1="0" x2="1" y2="1"><stop offset="0" stop-color="#1060c0"/><stop offset="1" stop-color="#1a78d8"/></linearGradient><linearGradient id="bc" x1="0" y1="0" x2="0" y2="1"><stop offset="0" stop-color="#f0a020"/><stop offset="1" stop-color="#b86010"/></linearGradient></defs><path d="M1 11 Q2 1 12.5 0.5 Q23 0.5 24.5 11 Q24.8 17 19 18 Q14.5 18.5 13.5 15 Q16 14 15.5 11 Q14.5 8 10.5 8 Q3.5 8.5 1 11 Z" fill="url(#ed1)"/><path d="M1 11 Q3.5 8.5 10.5 8 Q14.5 8 15.5 11 Q16 14 13.5 15 Q14.5 18.5 19 18 Q23 17.5 22.5 20 Q19 24.5 12.5 24.5 Q3 24 1 14 Z" fill="url(#ed2)"/><circle cx="12.3" cy="12.4" r="2.4" fill="#2a2018"/><rect x="0" y="14.5" width="12" height="9.5" rx="1" fill="url(#bc)"/><path d="M4 14.5 V13 Q4 12 5 12 H7 Q8 12 8 13 V14.5" fill="none" stroke="#555" stroke-width="0.8"/><rect x="5.3" y="17.5" width="1.6" height="1.4" fill="#f8e040"/></svg>
<div class="a" style="left:938.0px;top:1072px;width:6px;height:3px;background:#9c9488;border-radius:1.5px"></div>
<svg style="left:972px;top:1045px;" width="25" height="24" viewBox="0 0 25 24"><path d="M7 5 V2.5 Q7 0.5 9 0.5 H16 Q18 0.5 18 2.5 V5" fill="none" stroke="#2aa0e0" stroke-width="1.8"/><path d="M1 5 H24 V20 Q24 23 21 23 H4 Q1 23 1 20 Z" fill="#f4f4f4"/><rect x="8" y="9" width="4" height="4" fill="#f25022"/><rect x="13" y="9" width="4" height="4" fill="#7fba00"/><rect x="8" y="14" width="4" height="4" fill="#00a4ef"/><rect x="13" y="14" width="4" height="4" fill="#ffb900"/></svg>
<svg style="left:1018px;top:1044px;" width="22" height="25" viewBox="0 0 22 25"><defs><linearGradient id="br" x1="0" y1="0" x2="1" y2="0"><stop offset="0" stop-color="#ff5a1a"/><stop offset="1" stop-color="#f03a20"/></linearGradient></defs><path d="M4 0.5 H18 L21.5 4.5 L20.5 8 L21 15 Q19 21 11 24.5 Q3 21 1 15 L1.5 8 L0.5 4.5 Z" fill="url(#br)"/><path d="M3.5 7 L6.5 5 L9 6 H13 L15.5 5 L18.5 7 L18 10.5 L16 13 L15 17 L11 20.5 L7 17 L6 13 L4 10.5 Z" fill="#fff"/><path d="M7.5 9.5 L9.5 10.5 M14.5 9.5 L12.5 10.5 M11 10 V15 M9 15.5 L11 14.5 L13 15.5" fill="none" stroke="#f04a20" stroke-width="1"/></svg>
<div class="a" style="left:1026.0px;top:1072px;width:6px;height:3px;background:#9c9488;border-radius:1.5px"></div>
<svg style="left:1061px;top:1044px;" width="24" height="24" viewBox="0 0 24 24"><rect x="10" y="0.5" width="11" height="8.5" fill="#ddd"/><rect x="11.5" y="2" width="8" height="6" fill="#1a3ad0"/><rect x="12" y="9" width="11" height="3" fill="#bbb"/><rect x="1" y="11" width="11" height="8.5" fill="#ddd"/><rect x="2.5" y="12.5" width="8" height="6" fill="#1a3ad0"/><rect x="0" y="19.5" width="12" height="3.5" fill="#c8c8c8"/><path d="M15 6 L8 13 L12 13 L7 20" fill="none" stroke="#f8e020" stroke-width="1.8"/></svg>
<div class="a" style="left:1070.0px;top:1072px;width:6px;height:3px;background:#9c9488;border-radius:1.5px"></div>
<svg style="left:1104px;top:1038px;" width="27" height="30" viewBox="0 0 27 30"><rect x="7" y="7" width="18" height="21.5" rx="1" fill="#1478d4"/><path d="M7 17 L16 23 L25 17 V27.5 Q25 28.5 24 28.5 H8 Q7 28.5 7 27.5 Z" fill="#28a0ec"/><path d="M7 28.5 L16 21 L25 28.5 Z" fill="#38b0f4"/><rect x="1" y="12" width="12" height="12" rx="1" fill="#0c6ccc"/><ellipse cx="7" cy="18" rx="3.2" ry="3.6" fill="none" stroke="#fff" stroke-width="1.7"/><circle cx="22" cy="8.6" r="8.2" fill="#5ac8fa"/><rect x="17.5" y="5.5" width="9.5" height="7" rx="1" fill="none" stroke="#000" stroke-width="1.1"/><path d="M17.8 6 L22.2 9.2 L26.7 6" fill="none" stroke="#000" stroke-width="1"/></svg>
<div class="a" style="left:1114.0px;top:1072px;width:6px;height:3px;background:#9c9488;border-radius:1.5px"></div>
<svg style="left:1149px;top:1044px;" width="24" height="24" viewBox="0 0 24 24"><ellipse cx="12" cy="15" rx="11.5" ry="8" fill="#c02828"/><ellipse cx="12" cy="11" rx="11.5" ry="10" fill="#2a7ac8"/><ellipse cx="12" cy="9" rx="9" ry="7" fill="#58a8e8"/><path d="M12 4 V17 M5.5 10.5 H18.5" stroke="#fff" stroke-width="3.5"/></svg>
<div class="a" style="left:1158.0px;top:1072px;width:6px;height:3px;background:#9c9488;border-radius:1.5px"></div>
<svg style="left:1193px;top:1044px;" width="24" height="24" viewBox="0 0 24 24"><rect width="24" height="24" fill="#111"/><path d="M0 0 H18 Q16 6 12 8 Q6 11 0 18 Z" fill="#e83a30"/><path d="M0 0 H10 Q8 4 4 6 L0 9 Z" fill="#b82870"/><path d="M8 0 H14 Q13 6 9 10 Q4 14 0 20 V15 Q5 9 8 4 Z" fill="#f8a820"/><path d="M14 0 H24 V4 Q18 6 15 12 Q12 16 4 18 Q10 12 12 6 Z" fill="#28a8a0"/><circle cx="18" cy="15" r="3" fill="#fff"/><rect x="16.5" y="17" width="3" height="5" fill="#fff"/><circle cx="18" cy="15" r="1.2" fill="#111"/></svg>
<div class="a" style="left:1202.0px;top:1072px;width:6px;height:3px;background:#9c9488;border-radius:1.5px"></div>
<svg style="left:1239px;top:1044px;" width="21" height="24" viewBox="0 0 21 24"><rect x="0" y="2" width="20.5" height="21" rx="1.5" fill="#58c0e8"/><rect x="0" y="20.5" width="20.5" height="3" fill="#e08830"/><rect x="0" y="19.5" width="20.5" height="1.5" fill="#f4f4f4"/><path d="M3 7.5 H17.5 M3 11 H17.5 M3 14.5 H17.5" stroke="#1a7aa8" stroke-width="1.5"/><path d="M3.5 0.5 V3.5 M7.5 0.5 V3.5 M11.5 0.5 V3.5 M15.5 0.5 V3.5" stroke="#1a7aa8" stroke-width="1.3"/></svg>
<div class="a" style="left:1246.0px;top:1072px;width:6px;height:3px;background:#9c9488;border-radius:1.5px"></div>
<svg style="left:1280px;top:1039px;" width="29" height="30" viewBox="0 0 29 30"><circle cx="9" cy="9" r="3" fill="#8a8ae8"/><rect x="6" y="13" width="16" height="15" rx="5" fill="#6a5ad0"/><rect x="0" y="17" width="11" height="11" rx="2" fill="#4a48b8"/><path d="M3 20 H8 M5.5 20 V26" stroke="#fff" stroke-width="1.5"/><circle cx="21.5" cy="7.8" r="7.8" fill="#c42b1c"/></svg>
<div class="t" style="left:1298.5px;top:1040.77px;font-size:11.5px;color:#fff;font-weight:normal;">5</div>
<div class="a" style="left:1290.0px;top:1072px;width:6px;height:3px;background:#9c9488;border-radius:1.5px"></div>
<svg style="left:1325px;top:1046px;" width="24" height="19" viewBox="0 0 24 19"><rect width="24" height="19" fill="#d8e4ec"/><rect x="1.5" y="1.5" width="21" height="16" fill="#f0f6fa"/><path d="M1.5 15 L5 12 L7 8 L9 13 L12 11 L14 4 L16 12 L19 9 L22.5 14 V17.5 H1.5 Z" fill="#9cd0ec"/><path d="M1.5 15 L5 12 L7 8 L9 13 L12 11 L14 4 L16 12 L19 9 L22.5 14" fill="none" stroke="#2a9ae0" stroke-width="0.9"/></svg>
<div class="a" style="left:1334.0px;top:1072px;width:6px;height:3px;background:#9c9488;border-radius:1.5px"></div>
<div class="a" style="left:1361px;top:1036px;width:40px;height:40px;background:#82454d;border-radius:6px"></div>
<svg style="left:1369px;top:1043px;" width="25" height="25" viewBox="0 0 25 25"><rect x="0" y="0.8" width="18" height="18.2" rx="2" fill="#eeeff2"/><rect x="2" y="2.8" width="3" height="3" rx="0.8" fill="#e02a10"/><rect x="6" y="2.8" width="3" height="3" fill="#e02a10"/><rect x="10" y="2.8" width="3" height="3" rx="0.8" fill="#e02a10"/><rect x="2" y="6.8" width="3" height="3" fill="#e02a10"/><rect x="2" y="10.8" width="3" height="3" rx="0.8" fill="#e02a10"/><path d="M14.5 6.5 V20 M5 14.5 H19" stroke="#8e949c" stroke-width="2.4"/><circle cx="21.2" cy="14.5" r="2.5" fill="none" stroke="#22a8f0" stroke-width="1.9"/><circle cx="14.5" cy="21.5" r="2.5" fill="none" stroke="#22a8f0" stroke-width="1.9"/></svg>
<div class="a" style="left:1378px;top:1072px;width:6.5px;height:3px;background:#f6a3b3;border-radius:1.5px"></div>
<div class="t" style="right:22px;top:1040px;font-size:12px;color:#e4e4e4;text-align:right;line-height:16.5px">2:49 PM<br><span style="letter-spacing:0.45px;margin-right:-0.45px">11/3/2025</span></div>
<div class="a" style="left:496px;top:1010px;width:299px;height:71px;border:4px solid #e81c1e;border-bottom:none"></div>
<div class="a" style="left:496px;top:1076px;width:299px;height:5px;background:#e81c1e;"></div>
<svg style="left:640px;top:340px;" width="60" height="680" viewBox="0 0 60 680"><path d="M46 7 L27.4 656" stroke="#e81c1e" stroke-width="4" fill="none"/><path d="M17.5 656 L38.5 656 L28 675 Z" fill="#e81c1e"/></svg>
</body></html>
